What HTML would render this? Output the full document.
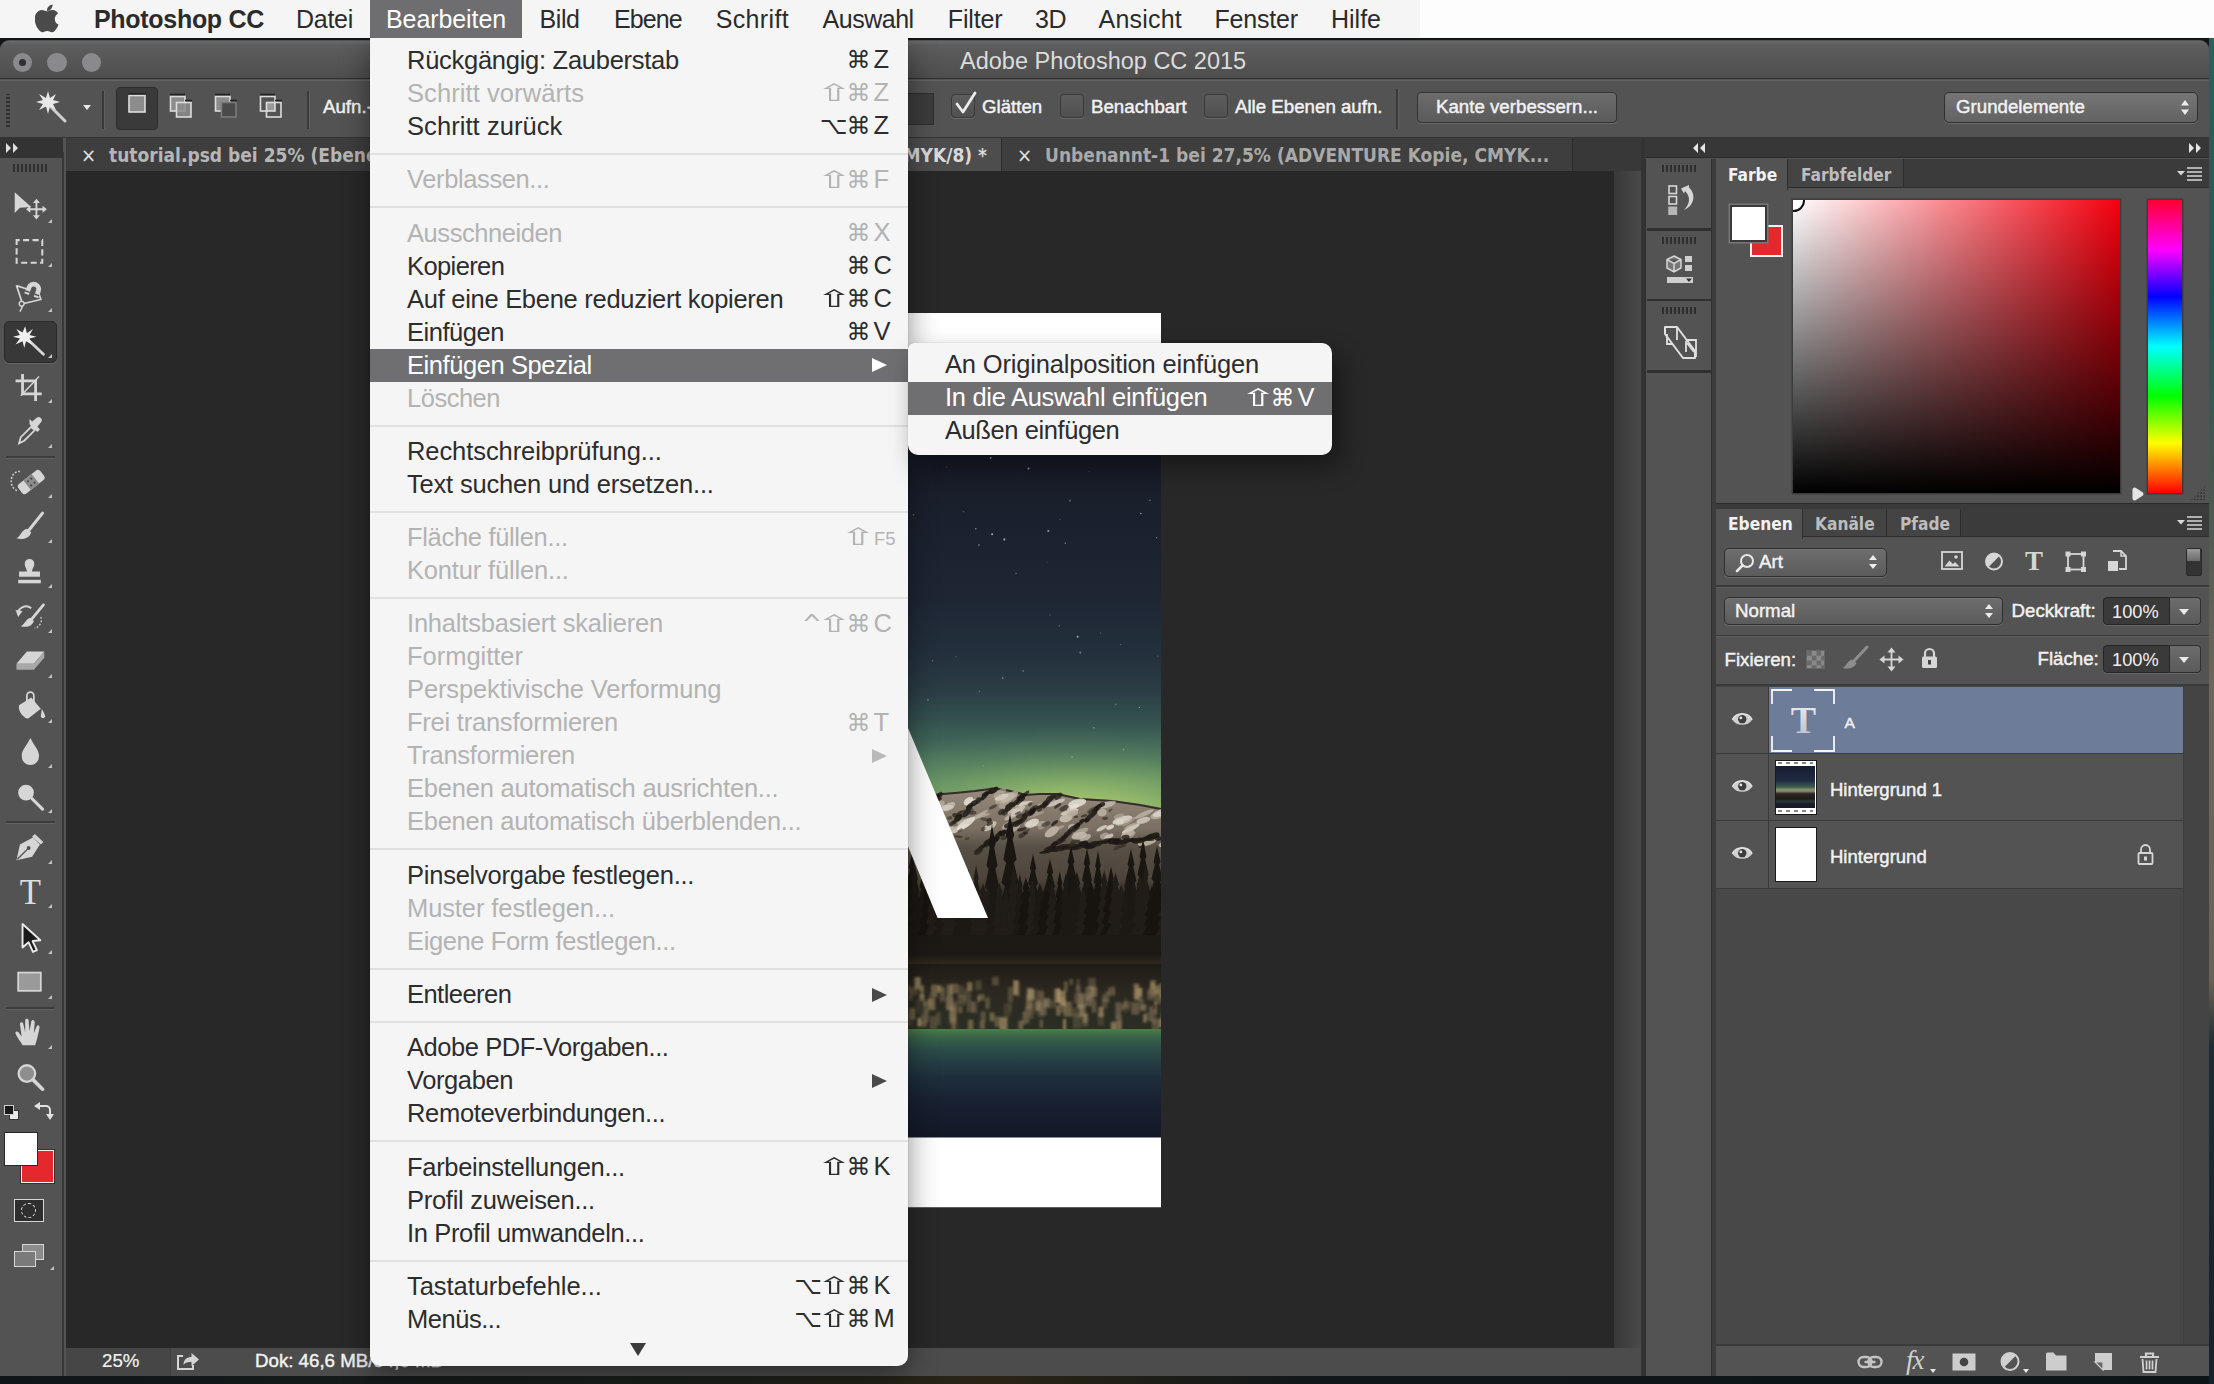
<!DOCTYPE html>
<html lang="de">
<head>
<meta charset="utf-8">
<title>Adobe Photoshop CC 2015</title>
<style>
*{box-sizing:border-box;margin:0;padding:0}
html,body{width:2214px;height:1384px;overflow:hidden;background:#10161a}
body{position:relative;font-family:"Liberation Sans","DejaVu Sans",sans-serif;color:#e6e6e6;-webkit-font-smoothing:antialiased}
.abs{position:absolute}
/* ---------- mac menubar ---------- */
#menubar{position:absolute;left:0;top:0;width:2214px;height:38px;background:#f5f5f5;z-index:50}
#menubar span{position:absolute;top:0;height:38px;line-height:38px;font-size:25px;color:#2b2b2b;white-space:nowrap}
#menubar .hl{background:#6e6e70;color:#fff}
/* ---------- PS window ---------- */
#win{position:absolute;left:0;top:40px;width:2209px;height:1336px;background:#535353;border-radius:9px 9px 0 0;overflow:hidden}
#titlebar{position:absolute;left:0;top:1px;width:100%;height:37.5px;background:linear-gradient(#6a6a6a,#5d5d5d 12%,#4e4e4e);border-bottom:1.5px solid #303030;border-radius:9px 9px 0 0}
#title{position:absolute;left:960px;top:-1px;line-height:42px;font-size:23.5px;color:#dcdcdc;white-space:nowrap}
.tl{position:absolute;top:11.5px;width:19.5px;height:19.5px;border-radius:50%;background:#8a8a8c}
#optbar{position:absolute;left:0;top:39.5px;width:100%;height:58px;background:#535353;border-top:1px solid #646464;border-bottom:1px solid #333}
.opt{position:absolute;line-height:22px;font-size:18.7px;color:#f2f2f2;white-space:nowrap;-webkit-text-stroke:.45px #f2f2f2}
.cb{position:absolute;width:24px;height:24px;border-radius:4px;background:linear-gradient(#5e5e5e,#505050);border:1.5px solid #3a3a3a;box-shadow:0 1px 0 #6a6a6a}
.btn{position:absolute;border-radius:4px;background:linear-gradient(#6c6c6c,#5a5a5a);border:1.5px solid #333;box-shadow:0 1px 0 #686868, inset 0 1px 0 #707070}

/* ---------- dropdown ---------- */
#menu{position:absolute;left:370px;top:38px;width:538px;height:1328px;background:#f5f5f5;border-radius:0 0 10px 10px;z-index:40;box-shadow:0 8px 30px rgba(0,0,0,.45),0 0 1px rgba(0,0,0,.5);padding-top:6px;overflow:hidden}
#menu .i{position:relative;height:33px;line-height:33px;font-size:25.5px;color:#2d2d2d;white-space:nowrap;padding-left:37px;letter-spacing:-.15px}
#menu .i.d{color:#b3b3b3}
#menu .i.sel{background:#6f6f71;color:#fff}
#menu .i b{position:absolute;right:12.5px;top:-.8px;font-weight:normal;letter-spacing:0}
#menu .i b u{text-decoration:none;font-family:"DejaVu Sans",sans-serif;font-size:24px;letter-spacing:-1px}
#menu .i b i{font-style:normal;display:inline-block;width:22px;text-align:left;margin-left:4px}
#menu .i em{position:absolute;right:21px;top:9.5px;width:0;height:0;border-left:15px solid #4a4a4a;border-top:7.5px solid transparent;border-bottom:7.5px solid transparent}
#menu .i.d em{border-left-color:#b9b9b9}
#menu .i.sel em{border-left-color:#fff}
u s{display:inline-block;text-decoration:none;transform:scaleX(1.8);margin:0 3.5px 0 3px}
#menu .s{height:20.3px;position:relative}
#menu .s:after{content:"";position:absolute;left:0;right:0;top:10px;height:2px;background:#e1e1e1}
#sub{position:absolute;left:908px;top:343px;width:424px;height:112px;background:#f5f5f5;border-radius:6px 10px 10px 10px;z-index:41;box-shadow:8px 12px 26px rgba(0,0,0,.42),0 0 1px rgba(0,0,0,.4);padding-top:6px;overflow:hidden}
#sub .i{position:relative;height:33px;line-height:31.5px;font-size:25.5px;color:#2d2d2d;white-space:nowrap;padding-left:37px;letter-spacing:-.15px}
#sub .i.sel{background:#6f6f71;color:#fff}
#sub .i b{position:absolute;right:12.5px;top:-.3px;font-weight:normal;letter-spacing:0}
#sub .i b u{text-decoration:none;font-family:"DejaVu Sans",sans-serif;font-size:24px;letter-spacing:-1px}
#sub .i b i{font-style:normal;display:inline-block;width:22px;margin-left:4px}

/* ---------- tab bar / canvas ---------- */
#tabbar{position:absolute;left:66px;top:98px;width:1575px;height:33.5px;background:#383838;border-bottom:1px solid #2a2a2a}
.tab{position:absolute;top:0;height:32.5px;background:#3e3e3e;border-right:1px solid #2b2b2b;font-family:"DejaVu Sans Condensed","DejaVu Sans","Liberation Sans",sans-serif;font-weight:bold;font-size:19px;line-height:35.5px;color:#a9a9a9;white-space:nowrap;overflow:hidden}
.tab.act{background:#4d4d4d;color:#d9d9d9}
.tab .x{position:absolute;left:0;top:0;font-weight:normal;font-size:20px;color:#e4e4e4}
#canvas{position:absolute;left:66px;top:131px;width:1548px;height:1177px;background:#282828;overflow:hidden}
#status{position:absolute;left:66px;top:1308px;width:1575px;height:28px;background:#4c4c4c}
#toolbox{position:absolute;left:0;top:112px;width:64px;height:1225px;background:#535353;border-right:2px solid #383838}
#tbhead{position:absolute;z-index:2;left:0;top:98px;width:63px;height:20px;background:#333}
.grip{position:absolute;height:8px;background:repeating-linear-gradient(90deg,#2e2e2e 0 2px,transparent 2px 4px)}
.tool{position:absolute;left:6px;width:50px;height:44px}
.tool svg{position:absolute;left:0;top:0;transform:translate(-1.5px,0) scale(.87);transform-origin:25px 22px}
.tsep{position:absolute;left:6px;width:49px;height:2px;background:#3d3d3d;box-shadow:0 1px 0 #626262}
.corner{position:absolute;width:0;height:0;border-bottom:4.5px solid #c4c4c4;border-left:4.5px solid transparent}
/* ---------- right dock ---------- */
#dockgap{position:absolute;left:1614px;top:131px;width:27px;height:1177px;background:linear-gradient(90deg,#383838,#4a4a4a)}
#dock{position:absolute;left:1645px;top:98px;width:564px;height:1239px;background:#535353}
.phead{position:absolute;background:#3b3b3b}
.ptab{position:absolute;top:0;height:100%;font-family:"DejaVu Sans Condensed","DejaVu Sans","Liberation Sans",sans-serif;font-weight:bold;font-size:17.2px;color:#bdbdbd;white-space:nowrap;border-right:1px solid #2d2d2d;background:#444}
.ptab.act{background:#535353;color:#f2f2f2}
.lbl{position:absolute;line-height:22px;font-size:18.7px;color:#f2f2f2;white-space:nowrap;-webkit-text-stroke:.45px #f2f2f2}
.dd{position:absolute;border-radius:5px;background:linear-gradient(#6e6e6e,#5b5b5b);border:1.5px solid #2f2f2f;box-shadow:0 1px 0 #6c6c6c,inset 0 1px 0 #747474}
.num{position:absolute;background:#3a3a3a;border:1.5px solid #262626;border-radius:4px 0 0 4px;font-size:18.3px;color:#f0f0f0;text-align:left;box-shadow:0 1px 0 #666}
.numbtn{position:absolute;background:linear-gradient(#6c6c6c,#5a5a5a);border:1.5px solid #2f2f2f;border-left:none;border-radius:0 4px 4px 0;box-shadow:0 1px 0 #666}
.dn{position:absolute;width:0;height:0;border-top:6px solid #e8e8e8;border-left:5px solid transparent;border-right:5px solid transparent}
.layer{position:absolute;left:75px;width:468px;height:67px;border-bottom:1.5px solid #3d3d3d}
.eye{position:absolute;left:75px;width:50px;height:67px;border-bottom:1.5px solid #3d3d3d;border-right:1.5px solid #3d3d3d;background:#535353}
</style>
</head>
<body>
<!-- desktop strip -->
<div class="abs" style="left:0;top:1376px;width:2214px;height:8px;background:linear-gradient(90deg,#0f1518,#1a1f1c 30%,#2a2416 45%,#10161a 60%,#0d1417)"></div>
<div class="abs" style="left:2209px;top:38px;width:5px;height:1346px;background:linear-gradient(#2e5f5a 0,#2a5652 20%,#4a5a50 35%,#6e6656 48%,#6a6252 70%,#1c2c34 75%,#14222a 100%)"></div>

<div id="win">
  <div id="titlebar">
    <div class="tl" style="left:12.6px"></div><div class="tl" style="left:47.3px"></div><div class="tl" style="left:81.8px"></div>
    <div class="abs" style="left:18.8px;top:17.7px;width:7.2px;height:7.2px;border-radius:50%;background:#303034"></div>
    <div id="title">Adobe Photoshop CC 2015</div>
  </div>

  <div id="optbar">
    <div class="grip" style="left:6px;top:13px;width:4px;height:33px;background:repeating-linear-gradient(0deg,#2e2e2e 0 2px,transparent 2px 4px)"></div>
    <div class="abs" style="left:102px;top:10px;width:1.5px;height:38px;background:#3a3a3a;box-shadow:1px 0 0 #606060"></div>
    <div class="abs" style="left:116px;top:6px;width:42px;height:43px;border-radius:4px;background:#3a3a3a;border:1px solid #2d2d2d"></div>
    <div class="abs" style="left:307px;top:10px;width:1.5px;height:38px;background:#3a3a3a;box-shadow:1px 0 0 #606060"></div>

    <svg class="abs" style="left:34px;top:9px" width="36" height="36" viewBox="0 0 36 36"><path d="M17 17 L31 31" stroke="#cfcfcf" stroke-width="3" stroke-linecap="round"/><path d="M14 1 l2 7 l6 -4 l-3 6 l7 2 l-7 2 l3 6 l-6 -3.500 l-2 7.500 l-2 -7.500 l-7 3.500 l4 -6 l-7 -2 l7 -2 l-4 -6 l7 4z" fill="#e8e8e8"/></svg>
    <div class="dn" style="left:83px;top:24px;border-top-width:5.500px;border-left-width:4.500px;border-right-width:4.500px"></div>
    <svg class="abs" style="left:126px;top:11px" width="22" height="24" viewBox="0 0 22 24"><rect x="3" y="3.500" width="16" height="16.500" fill="#8c8c8c" stroke="#dcdcdc" stroke-width="1.600"/><path d="M2 1.800 h18" stroke="#222" stroke-width="1.400"/></svg>
    <svg class="abs" style="left:167px;top:11px" width="28" height="30" viewBox="0 0 28 30"><rect x="3.500" y="4.500" width="14.500" height="14.500" fill="#8c8c8c" stroke="#dcdcdc" stroke-width="1.600"/><rect x="9.500" y="10.500" width="14.500" height="14.500" fill="#8c8c8c" fill-opacity=".85" stroke="#dcdcdc" stroke-width="1.600"/><path d="M3 2.500 h15 M18 8.500 h7" stroke="#222" stroke-width="1.400"/></svg>
    <svg class="abs" style="left:212px;top:11px" width="28" height="30" viewBox="0 0 28 30"><rect x="3.500" y="4.500" width="14.500" height="14.500" fill="#8c8c8c" stroke="#dcdcdc" stroke-width="1.600"/><rect x="9.500" y="10.500" width="14.500" height="14.500" fill="#4a4a4a" stroke="#7a7a7a" stroke-width="1.600"/><path d="M3 2.500 h15 M18 8.500 h7" stroke="#222" stroke-width="1.400"/></svg>
    <svg class="abs" style="left:257px;top:11px" width="28" height="30" viewBox="0 0 28 30"><rect x="9.500" y="10.500" width="8.500" height="8.500" fill="#9a9a9a"/><rect x="3.500" y="4.500" width="14.500" height="14.500" fill="none" stroke="#dcdcdc" stroke-width="1.600"/><rect x="9.500" y="10.500" width="14.500" height="14.500" fill="none" stroke="#dcdcdc" stroke-width="1.600"/><path d="M3 2.500 h15 M18 8.500 h7" stroke="#222" stroke-width="1.400"/></svg>
    <svg class="abs" style="left:952px;top:9px;z-index:3" width="28" height="28" viewBox="0 0 28 28"><path d="M5 14 l6 8 l12 -19" fill="none" stroke="#ececec" stroke-width="2.800" stroke-linecap="round" stroke-linejoin="round"/></svg>
    <svg class="abs" style="left:2180px;top:18.5px;z-index:3" width="10" height="17" viewBox="0 0 10 17"><path d="M1 6.500 l4 -5.500 l4 5.500z M1 10.500 l4 5.500 l4 -5.500z" fill="#ececec"/></svg>
    <div class="opt" style="left:323px;top:15.2px">Aufn.-</div>
    <div class="abs" style="left:908px;top:12px;width:26px;height:32px;background:#3c3c3c;border:1.5px solid #2e2e2e;border-left:none"></div>
    <div class="cb" style="left:951px;top:13px"></div>
    <div class="opt" style="left:982px;top:15.2px">Glätten</div>
    <div class="cb" style="left:1060px;top:13px"></div>
    <div class="opt" style="left:1091px;top:15.2px">Benachbart</div>
    <div class="cb" style="left:1204px;top:13px"></div>
    <div class="opt" style="left:1235px;top:15.2px">Alle Ebenen aufn.</div>
    <div class="abs" style="left:1396px;top:8px;width:1.5px;height:40px;background:#3a3a3a;box-shadow:1px 0 0 #606060"></div>
    <div class="btn" style="left:1417px;top:11px;width:200px;height:31px"></div>
    <div class="opt" style="left:1436px;top:15.2px">Kante verbessern...</div>
    <div class="dd" style="left:1944px;top:11px;width:254px;height:31px;background:linear-gradient(#767676,#626262)"></div>
    <div class="opt" style="left:1956px;top:15.2px">Grundelemente</div>
  </div>

  <div id="tbhead"><svg class="abs" style="left:5px;top:4px" width="16" height="12" viewBox="0 0 16 12"><path d="M1 1 l5 5 l-5 5z M8 1 l5 5 l-5 5z" fill="#e0e0e0"/></svg></div>
  <div id="toolbox">
    <div class="tool" style="top:33px"><svg width="50" height="44" viewBox="0 0 50 44"><path d="M8 5 V29 L14 23 L27 22 Z" fill="#d6d6d6"/><path d="M33 16 v17 M24.500 24.500 h17" stroke="#d6d6d6" stroke-width="2.200" fill="none"/><path d="M33 12.500 l-4 5 h8z M33 36.500 l-4 -5 h8z M21 24.500 l5 -4 v8z M45 24.500 l-5 -4 v8z" fill="#d6d6d6"/></svg><div class="corner" style="left:41.5px;top:33.5px"></div></div>
    <div class="tool" style="top:77px"><svg width="50" height="44" viewBox="0 0 50 44"><rect x="10.200" y="9.500" width="29.500" height="26" fill="none" stroke="#d6d6d6" stroke-width="2.300" stroke-dasharray="7 3.900" stroke-dashoffset="3.500"/></svg><div class="corner" style="left:41.5px;top:33.5px"></div></div>
    <div class="tool" style="top:122px"><svg width="50" height="44" viewBox="0 0 50 44"><path d="M10 10 L17 31 L38 26 L36 20" fill="none" stroke="#d6d6d6" stroke-width="2"/><path d="M10 10 L22 14" fill="none" stroke="#d6d6d6" stroke-width="2"/><g transform="rotate(20 29 15)"><path d="M21 22 v-8 a8.500 8.500 0 0 1 17 0 v8 h-5.500 v-8 a3 3 0 0 0 -6 0 v8z" fill="#d6d6d6"/><path d="M21 19 h5.500 M32.500 19 h5.500" stroke="#444" stroke-width="1.500"/></g><circle cx="16" cy="31" r="2.800" fill="#535353" stroke="#d6d6d6" stroke-width="1.600"/><path d="M17 34 l-3 6" stroke="#d6d6d6" stroke-width="1.600"/></svg><div class="corner" style="left:41.5px;top:33.5px"></div></div>
    <div class="tool" style="top:168px"><div class="abs" style="left:-2px;top:1px;width:53px;height:42px;border-radius:5px;background:#383838;border:1.5px solid #2a2a2a;box-shadow:0 1px 0 #666"></div><svg width="50" height="44" viewBox="0 0 50 44"><path d="M21 17 L41 36" stroke="#d6d6d6" stroke-width="3.2" stroke-linecap="round"/><path d="M20 4 l2 8 l7 -5 l-4 7 l8 2 l-8 2 l3 7 l-7 -4 l-2 8 l-2 -8 l-8 4 l5 -7 l-8 -2 l8 -2 l-4 -7 l7 4z" fill="#f0f0f0"/></svg><div class="corner" style="left:41.5px;top:33.5px"></div></div>
    <div class="tool" style="top:213px"><svg width="50" height="44" viewBox="0 0 50 44"><path d="M17 7 v23 h22 M9 15 h23 v23" fill="none" stroke="#d6d6d6" stroke-width="3.2"/><path d="M15 32 L36 10" stroke="#d6d6d6" stroke-width="1.6"/></svg><div class="corner" style="left:41.5px;top:33.5px"></div></div>
    <div class="tool" style="top:258px"><svg width="50" height="44" viewBox="0 0 50 44"><path d="M13 35 l2 -7 l12 -12 l4 4 l-12 12 z" fill="none" stroke="#d6d6d6" stroke-width="2"/><path d="M25 13 l9 9 l3 -3 l-3 -3 l4 -5 a3.5 3.5 0 0 0 -5 -5 l-5 4 l-3 -3z" fill="#d6d6d6"/></svg><div class="corner" style="left:41.5px;top:33.5px"></div></div>
    <div class="tool" style="top:308px"><svg width="50" height="44" viewBox="0 0 50 44"><g transform="rotate(-38 27 22)"><rect x="11" y="15" width="32" height="14" rx="4" fill="#d6d6d6"/><rect x="21" y="15" width="12" height="14" fill="#8a8a8a"/><circle cx="24.5" cy="19" r="1.2" fill="#444"/><circle cx="29.5" cy="19" r="1.2" fill="#444"/><circle cx="24.5" cy="25" r="1.2" fill="#444"/><circle cx="29.5" cy="25" r="1.2" fill="#444"/></g><path d="M14 10 a9 11 0 0 0 -2 22" fill="none" stroke="#d6d6d6" stroke-width="1.8" stroke-dasharray="2 2"/></svg><div class="corner" style="left:41.5px;top:33.5px"></div></div>
    <div class="tool" style="top:353px"><svg width="50" height="44" viewBox="0 0 50 44"><path d="M40 6 L24 26" stroke="#d6d6d6" stroke-width="3.5" stroke-linecap="round"/><path d="M22 24 l5 4 c-2 7 -9 9 -17 7 c5 -2 5 -9 12 -11z" fill="#d6d6d6"/></svg><div class="corner" style="left:41.5px;top:33.5px"></div></div>
    <div class="tool" style="top:398px"><svg width="50" height="44" viewBox="0 0 50 44"><path d="M25 7 a5.5 5.5 0 0 1 5.5 5.5 c0 4 -2.5 5 -2.5 9 h9 v6 h-24 v-6 h9 c0 -4 -2.5 -5 -2.5 -9 a5.5 5.5 0 0 1 5.5 -5.5z" fill="#d6d6d6"/><rect x="12" y="31" width="26" height="4" fill="#d6d6d6"/></svg><div class="corner" style="left:41.5px;top:33.5px"></div></div>
    <div class="tool" style="top:443px"><svg width="50" height="44" viewBox="0 0 50 44"><path d="M41 8 L28 24" stroke="#d6d6d6" stroke-width="3.2" stroke-linecap="round"/><path d="M26 23 l4 3.5 c-2 6 -8 8 -15 6 c5 -2 5 -7.5 11 -9.5z" fill="#d6d6d6"/><path d="M12 19 a9 8 0 0 1 15 -7" fill="none" stroke="#d6d6d6" stroke-width="2.2"/><path d="M9 14 l8 1 l-5 7z" fill="#d6d6d6"/><path d="M38 22 a10 10 0 0 1 -7 13" fill="none" stroke="#d6d6d6" stroke-width="1.6" stroke-dasharray="2 2"/></svg><div class="corner" style="left:41.5px;top:33.5px"></div></div>
    <div class="tool" style="top:488px"><svg width="50" height="44" viewBox="0 0 50 44"><path d="M22 10 h20 l-12 14 h-20z" fill="#d6d6d6"/><path d="M10 24 h20 l12 -14 v7 l-12 14 h-20z" fill="#a8a8a8"/></svg><div class="corner" style="left:41.5px;top:33.5px"></div></div>
    <div class="tool" style="top:533px"><svg width="50" height="44" viewBox="0 0 50 44"><path d="M13 20 l14 -9 l11 13 l-14 11 c-4 2 -13 -8 -11 -15z" fill="#d6d6d6"/><path d="M22 22 v-13 a4 4 0 0 1 8 0 v8" fill="none" stroke="#d6d6d6" stroke-width="2"/><path d="M39 24 c3 5 4 7 4 9 a2.6 2.6 0 0 1 -5 0 c0 -3 1 -5 1 -9z" fill="#d6d6d6"/></svg><div class="corner" style="left:41.5px;top:33.5px"></div></div>
    <div class="tool" style="top:578px"><svg width="50" height="44" viewBox="0 0 50 44"><path d="M26 6 c5 10 10 14 10 21 a10 10 0 0 1 -20 0 c0 -7 5 -11 10 -21z" fill="#d6d6d6"/></svg><div class="corner" style="left:41.5px;top:33.5px"></div></div>
    <div class="tool" style="top:623px"><svg width="50" height="44" viewBox="0 0 50 44"><circle cx="21" cy="17" r="9" fill="#d6d6d6"/><path d="M28 24 L40 36" stroke="#d6d6d6" stroke-width="3.6" stroke-linecap="round"/></svg><div class="corner" style="left:41.5px;top:33.5px"></div></div>
    <div class="tool" style="top:674px"><svg width="50" height="44" viewBox="0 0 50 44"><path d="M10 36 l4 -18 l15 -8 l8 8 l-9 14z" fill="#d6d6d6"/><path d="M31 6 l10 9 l-3 3 l-10 -9z" fill="#d6d6d6"/><path d="M11 35 l12 -12" stroke="#535353" stroke-width="1.6"/><circle cx="24" cy="22" r="2.2" fill="#535353"/></svg><div class="corner" style="left:41.5px;top:33.5px"></div></div>
    <div class="tool" style="top:718px"><svg width="50" height="44" viewBox="0 0 50 44"><text x="26" y="36" text-anchor="middle" font-family="Liberation Serif, serif" font-size="40" fill="#dcdcdc">T</text></svg><div class="corner" style="left:41.5px;top:33.5px"></div></div>
    <div class="tool" style="top:764px"><svg width="50" height="44" viewBox="0 0 50 44"><path d="M17 6 v27 l7 -6 l5 11 l4.5 -2 l-5 -10.5 l9 -1z" fill="#1a1a1a" stroke="#ececec" stroke-width="2.2" stroke-linejoin="round"/></svg><div class="corner" style="left:41.5px;top:33.5px"></div></div>
    <div class="tool" style="top:809px"><svg width="50" height="44" viewBox="0 0 50 44"><rect x="12" y="10" width="26" height="21" fill="#9a9a9a" stroke="#d6d6d6" stroke-width="2"/></svg><div class="corner" style="left:41.5px;top:33.5px"></div></div>
    <div class="tool" style="top:859px"><svg width="50" height="44" viewBox="0 0 50 44"><path d="M17 36 c-3 -5 -7 -10 -8 -13 c-1 -3 2 -4 4 -1 l3 4 l-2 -14 c0 -3 3.5 -3 4 0 l2 9 l0 -13 c0 -3 4 -3 4 0 l1 12 l2 -11 c1 -3 4 -2 4 1 l-1 12 l3 -7 c1 -3 4 -2 3.5 1 c-1 6 -3 14 -5 20z" fill="#d6d6d6"/></svg><div class="corner" style="left:41.5px;top:33.5px"></div></div>
    <div class="tool" style="top:903px"><svg width="50" height="44" viewBox="0 0 50 44"><circle cx="22" cy="18" r="9.5" fill="#8e8e8e" stroke="#d6d6d6" stroke-width="2.6"/><path d="M29 25 L40 36" stroke="#d6d6d6" stroke-width="4.2" stroke-linecap="round"/></svg></div>
    <div class="tsep" style="top:304px"></div>
    <div class="tsep" style="top:669px"></div>
    <div class="tsep" style="top:855px"></div>
    <div class="grip" style="left:13px;top:12px;width:35px"></div>
    <!-- default / swap colours -->
    <div class="abs" style="left:9px;top:958px;width:10px;height:10px;background:#e8e8e8;border:1px solid #333"></div>
    <div class="abs" style="left:4px;top:953px;width:10px;height:10px;background:#1a1a1a;border:1px solid #ccc"></div>
    <svg class="abs" style="left:33px;top:950px" width="22" height="20" viewBox="0 0 22 20"><path d="M6 4 h7 a4 4 0 0 1 4 4 v5" fill="none" stroke="#e0e0e0" stroke-width="2"/><path d="M7 0 v8 l-6 -4z M13 12 h8 l-4 6z" fill="#e0e0e0"/></svg>
    <div class="abs" style="left:21px;top:998px;width:33px;height:33px;background:#e5272e;border:1.5px solid #f2f2f2;box-shadow:0 0 0 1px #333"></div>
    <div class="abs" style="left:4px;top:980px;width:34px;height:34px;background:#fff;border:1.5px solid #2a2a2a"></div>
    <!-- quick mask -->
    <div class="abs" style="left:14px;top:1047px;width:30px;height:23px;background:#2e2e2e;border:1.5px solid #d6d6d6"></div>
    <div class="abs" style="left:21px;top:1051px;width:15px;height:15px;border-radius:50%;border:1.5px dashed #e8e8e8"></div>
    <!-- screen mode -->
    <div class="abs" style="left:22px;top:1092px;width:22px;height:16px;background:#8c8c8c;border:1.5px solid #d6d6d6"></div>
    <div class="abs" style="left:14px;top:1099px;width:22px;height:16px;background:#7a7a7a;border:1.5px solid #d6d6d6"></div>
    <div class="corner" style="left:50px;top:1114px"></div>
  </div>

  <div id="tabbar">
    <div class="tab" style="left:0;width:560px;padding-left:43px;color:#b6b6b6"><span class="x" style="left:15px">×</span>tutorial.psd bei 25% (Ebene 1, CMYK/8) *</div>
    <div class="tab act" style="left:560px;width:376px"><span class="abs" style="right:14px;top:0">tutorial Kopie.psd bei 25% (A, CMYK/8) *</span></div>
    <div class="tab" style="left:936px;width:571px;padding-left:43px"><span class="x" style="left:15px">×</span>Unbenannt-1 bei 27,5% (ADVENTURE Kopie, CMYK...</div>
  </div>
  <div id="canvas"><svg class="abs" style="left:0;top:0" width="1548" height="1177" viewBox="0 0 1548 1177">
<defs>
<clipPath id="doc"><rect x="451" y="142" width="644" height="894.5"/></clipPath>
<linearGradient id="sky" x1="0" y1="0" x2="0" y2="1">
<stop offset="0" stop-color="#131622"/><stop offset=".175" stop-color="#181c28"/><stop offset=".5" stop-color="#1e2634"/><stop offset=".62" stop-color="#232f3c"/><stop offset=".71" stop-color="#2a3c44"/><stop offset=".78" stop-color="#33504e"/><stop offset=".85" stop-color="#44695a"/><stop offset=".925" stop-color="#5f8c62"/><stop offset="1" stop-color="#6f9c64"/>
</linearGradient>
<radialGradient id="glow" cx=".866" cy="1" r=".42" gradientTransform="translate(0 0)"><stop offset="0" stop-color="#b4cf74" stop-opacity="1"/><stop offset=".3" stop-color="#9cc06c" stop-opacity=".7"/><stop offset=".7" stop-color="#6f9c64" stop-opacity=".22"/><stop offset="1" stop-color="#5c8e68" stop-opacity="0"/></radialGradient>
<linearGradient id="mt" gradientUnits="userSpaceOnUse" x1="0" y1="615" x2="0" y2="759"><stop offset="0" stop-color="#978c7d"/><stop offset=".3" stop-color="#7a6f62"/><stop offset=".42" stop-color="#585046"/><stop offset=".7" stop-color="#4a4238"/><stop offset="1" stop-color="#1f1b16"/></linearGradient>
<linearGradient id="tr" x1="0" y1="0" x2="0" y2="1"><stop offset="0" stop-color="#1b1713" stop-opacity="0"/><stop offset=".35" stop-color="#1b1713"/><stop offset=".85" stop-color="#1d1915"/><stop offset="1" stop-color="#3a3024"/></linearGradient>
<linearGradient id="rf" x1="0" y1="0" x2="0" y2="1"><stop offset="0" stop-color="#1f1b16"/><stop offset=".4" stop-color="#2c2820"/><stop offset="1" stop-color="#2a2e24"/></linearGradient>
<linearGradient id="wt" x1="0" y1="0" x2="0" y2="1"><stop offset="0" stop-color="#4c7c48"/><stop offset=".08" stop-color="#38624a"/><stop offset=".2" stop-color="#2a4a48"/><stop offset=".45" stop-color="#1e2e3c"/><stop offset=".7" stop-color="#181f30"/><stop offset="1" stop-color="#141826"/></linearGradient>
<filter id="b1"><feGaussianBlur stdDeviation="1.3"/></filter>
<filter id="b0"><feGaussianBlur stdDeviation=".6"/></filter>
</defs>
<rect x="1548" y="0" width="0" height="0"/>
<g clip-path="url(#doc)">
<rect x="451" y="142" width="644" height="894.5" fill="#fff"/>
<rect x="451" y="214" width="644" height="427" fill="url(#sky)"/>
<rect x="451" y="439" width="644" height="202" fill="url(#glow)"/>
<circle cx="994.0" cy="348.2" r="0.5" fill="#dfe6ee" opacity="0.47"/><circle cx="1034.3" cy="462.0" r="0.6" fill="#dfe6ee" opacity="0.45"/><circle cx="962.5" cy="297.5" r="1.0" fill="#dfe6ee" opacity="0.64"/><circle cx="847.5" cy="343.7" r="0.8" fill="#dfe6ee" opacity="0.35"/><circle cx="950.1" cy="402.3" r="0.6" fill="#dfe6ee" opacity="0.59"/><circle cx="1023.2" cy="300.3" r="0.5" fill="#dfe6ee" opacity="0.32"/><circle cx="880.4" cy="295.8" r="0.5" fill="#dfe6ee" opacity="0.36"/><circle cx="1004.0" cy="329.7" r="1.1" fill="#dfe6ee" opacity="0.27"/><circle cx="1054.8" cy="473.5" r="0.5" fill="#dfe6ee" opacity="0.52"/><circle cx="897.6" cy="340.7" r="0.8" fill="#dfe6ee" opacity="0.30"/><circle cx="890.1" cy="485.7" r="0.6" fill="#dfe6ee" opacity="0.28"/><circle cx="1049.8" cy="533.4" r="0.8" fill="#dfe6ee" opacity="0.32"/><circle cx="983.9" cy="444.0" r="0.8" fill="#dfe6ee" opacity="0.25"/><circle cx="917.4" cy="595.1" r="0.5" fill="#dfe6ee" opacity="0.34"/><circle cx="924.6" cy="286.9" r="1.0" fill="#dfe6ee" opacity="0.63"/><circle cx="912.9" cy="374.1" r="1.1" fill="#dfe6ee" opacity="0.31"/><circle cx="936.8" cy="507.0" r="0.7" fill="#dfe6ee" opacity="0.67"/><circle cx="866.5" cy="489.7" r="0.7" fill="#dfe6ee" opacity="0.38"/><circle cx="913.7" cy="520.3" r="0.5" fill="#dfe6ee" opacity="0.56"/><circle cx="1074.8" cy="342.5" r="0.8" fill="#dfe6ee" opacity="0.64"/><circle cx="926.1" cy="363.3" r="1.0" fill="#dfe6ee" opacity="0.69"/><circle cx="1027.8" cy="556.8" r="0.7" fill="#dfe6ee" opacity="0.52"/><circle cx="1011.6" cy="465.7" r="1.0" fill="#dfe6ee" opacity="0.65"/><circle cx="909.7" cy="357.8" r="0.8" fill="#dfe6ee" opacity="0.55"/><circle cx="1083.9" cy="329.3" r="0.8" fill="#dfe6ee" opacity="0.47"/><circle cx="861.9" cy="528.8" r="1.1" fill="#dfe6ee" opacity="0.28"/><circle cx="999.3" cy="372.1" r="0.7" fill="#dfe6ee" opacity="0.68"/><circle cx="938.3" cy="368.4" r="1.1" fill="#dfe6ee" opacity="0.64"/><circle cx="1090.6" cy="366.7" r="0.7" fill="#dfe6ee" opacity="0.48"/><circle cx="993.4" cy="454.8" r="0.7" fill="#dfe6ee" opacity="0.34"/><circle cx="981.0" cy="390.9" r="0.5" fill="#dfe6ee" opacity="0.30"/><circle cx="1014.3" cy="481.6" r="1.1" fill="#dfe6ee" opacity="0.37"/><circle cx="1091.8" cy="484.9" r="0.5" fill="#dfe6ee" opacity="0.44"/><circle cx="1073.4" cy="536.4" r="0.6" fill="#dfe6ee" opacity="0.58"/><circle cx="1057.5" cy="578.6" r="0.8" fill="#dfe6ee" opacity="0.37"/><circle cx="982.3" cy="360.0" r="1.1" fill="#dfe6ee" opacity="0.58"/><circle cx="957.1" cy="499.9" r="0.6" fill="#dfe6ee" opacity="0.66"/><circle cx="1006.1" cy="585.9" r="0.6" fill="#dfe6ee" opacity="0.53"/>
<polygon points="451.0,664.0 494.0,649.0 544.0,634.0 594.0,641.0 634.0,625.0 694.0,632.0 734.0,619.0 784.0,632.0 834.0,628.0 871.0,622.5 889.0,621.0 909.0,619.0 928.0,616.5 942.0,618.5 960.0,623.0 974.0,622.0 991.0,622.0 1014.0,627.0 1046.0,629.0 1074.0,633.0 1095.0,637.0 1095.0,797.0 451.0,797.0" fill="url(#mt)"/>
<polyline points="451.0,665.0 494.0,650.0 544.0,635.0 594.0,642.0 634.0,626.0 694.0,633.0 734.0,620.0 784.0,633.0 834.0,629.0 871.0,623.5 889.0,622.0 909.0,620.0 928.0,617.5 942.0,619.5 960.0,624.0 974.0,623.0 991.0,623.0 1014.0,628.0 1046.0,630.0 1074.0,634.0 1095.0,638.0" fill="none" stroke="#241f1a" stroke-width="2.2" opacity=".85"/>
<g filter="url(#b0)"><ellipse cx="913.0" cy="644.7" rx="10.5" ry="1.8" fill="#ddd6ca" opacity="0.5142499422851401" transform="rotate(-31.111773470927155 913.0 644.7)"/><ellipse cx="871.7" cy="636.7" rx="9.1" ry="2.1" fill="#c8beae" opacity="0.5419542029490364" transform="rotate(-16.727656241089722 871.7 636.7)"/><ellipse cx="897.2" cy="642.6" rx="5.8" ry="2.0" fill="#b8ae9e" opacity="0.8514926237963916" transform="rotate(-34.41874977653172 897.2 642.6)"/><ellipse cx="1014.6" cy="660.7" rx="8.3" ry="2.8" fill="#b8ae9e" opacity="0.7553868657897227" transform="rotate(-21.75952456590322 1014.6 660.7)"/><ellipse cx="1064.8" cy="657.7" rx="10.0" ry="2.1" fill="#e6e0d6" opacity="0.8610710119638889" transform="rotate(-27.103155031217728 1064.8 657.7)"/><ellipse cx="941.4" cy="655.6" rx="5.5" ry="4.0" fill="#ddd6ca" opacity="0.5535728898315754" transform="rotate(-29.01631315563963 941.4 655.6)"/><ellipse cx="1036.1" cy="641.7" rx="4.7" ry="3.6" fill="#c8beae" opacity="0.7173107051549429" transform="rotate(-17.379025569930064 1036.1 641.7)"/><ellipse cx="915.1" cy="644.8" rx="9.6" ry="1.7" fill="#b8ae9e" opacity="0.7729532550501454" transform="rotate(-12.215675670472155 915.1 644.8)"/><ellipse cx="1091.7" cy="644.5" rx="7.5" ry="3.4" fill="#b8ae9e" opacity="0.8994346639087278" transform="rotate(-14.176273161730304 1091.7 644.5)"/><ellipse cx="1053.7" cy="651.4" rx="4.2" ry="3.4" fill="#b8ae9e" opacity="0.70592972905964" transform="rotate(-20.78144563710747 1053.7 651.4)"/><ellipse cx="902.7" cy="630.3" rx="5.4" ry="3.6" fill="#e6e0d6" opacity="0.8707569261578854" transform="rotate(-32.61883940924355 902.7 630.3)"/><ellipse cx="883.2" cy="659.7" rx="7.2" ry="3.4" fill="#e6e0d6" opacity="0.6563537492363449" transform="rotate(-24.338914767785536 883.2 659.7)"/><ellipse cx="950.6" cy="632.2" rx="6.6" ry="3.1" fill="#ddd6ca" opacity="0.837705147863242" transform="rotate(-30.46827033013928 950.6 632.2)"/><ellipse cx="973.4" cy="652.7" rx="6.8" ry="2.0" fill="#d2c9bb" opacity="0.5379206613080525" transform="rotate(-15.191271376718273 973.4 652.7)"/><ellipse cx="943.5" cy="625.9" rx="9.9" ry="3.7" fill="#c8beae" opacity="0.7278735834348355" transform="rotate(-30.226303952878588 943.5 625.9)"/><ellipse cx="1003.5" cy="641.0" rx="9.3" ry="2.2" fill="#ddd6ca" opacity="0.7977739624469795" transform="rotate(-15.55030048637894 1003.5 641.0)"/><ellipse cx="1056.4" cy="649.1" rx="10.3" ry="3.7" fill="#e6e0d6" opacity="0.8069079203356616" transform="rotate(-15.869271572390659 1056.4 649.1)"/><ellipse cx="962.3" cy="652.8" rx="4.5" ry="2.4" fill="#c8beae" opacity="0.5403452754336434" transform="rotate(-12.798795820095172 962.3 652.8)"/><ellipse cx="1096.8" cy="673.5" rx="4.3" ry="2.2" fill="#e6e0d6" opacity="0.6351262456656928" transform="rotate(-18.505969232668857 1096.8 673.5)"/><ellipse cx="1000.0" cy="647.1" rx="6.7" ry="4.0" fill="#d2c9bb" opacity="0.7805002782333208" transform="rotate(-15.956507400539799 1000.0 647.1)"/><ellipse cx="1094.4" cy="641.7" rx="8.3" ry="3.3" fill="#e6e0d6" opacity="0.6774585914658178" transform="rotate(-22.380967838604576 1094.4 641.7)"/><ellipse cx="1044.1" cy="656.2" rx="4.1" ry="2.1" fill="#e6e0d6" opacity="0.8622573058034413" transform="rotate(-21.24855772769311 1044.1 656.2)"/><ellipse cx="985.8" cy="660.8" rx="8.0" ry="4.0" fill="#c8beae" opacity="0.8238112886090718" transform="rotate(-33.09510027069308 985.8 660.8)"/><ellipse cx="1006.4" cy="656.7" rx="4.3" ry="3.8" fill="#d2c9bb" opacity="0.6543609931223437" transform="rotate(-10.748251719563708 1006.4 656.7)"/><ellipse cx="1065.8" cy="655.3" rx="8.2" ry="2.6" fill="#c8beae" opacity="0.6682815470827694" transform="rotate(-21.831043958930728 1065.8 655.3)"/><ellipse cx="1006.5" cy="642.5" rx="6.0" ry="3.1" fill="#b8ae9e" opacity="0.8717901446924462" transform="rotate(-18.41018059913036 1006.5 642.5)"/><ellipse cx="1041.0" cy="633.7" rx="9.4" ry="3.0" fill="#d2c9bb" opacity="0.6635223113138811" transform="rotate(-17.891771310948663 1041.0 633.7)"/><ellipse cx="881.1" cy="637.0" rx="6.8" ry="3.0" fill="#e6e0d6" opacity="0.5294017130064714" transform="rotate(-12.361228461618541 881.1 637.0)"/><ellipse cx="967.8" cy="643.6" rx="10.8" ry="2.1" fill="#b8ae9e" opacity="0.5393891809501378" transform="rotate(-14.745789482679637 967.8 643.6)"/><ellipse cx="1078.2" cy="643.0" rx="10.7" ry="2.1" fill="#ddd6ca" opacity="0.5201598990686177" transform="rotate(-24.57105084216433 1078.2 643.0)"/><ellipse cx="896.1" cy="655.3" rx="6.5" ry="1.9" fill="#e6e0d6" opacity="0.6771456454389639" transform="rotate(-18.302718509552395 896.1 655.3)"/><ellipse cx="973.8" cy="635.5" rx="8.1" ry="2.5" fill="#b8ae9e" opacity="0.8260527551103669" transform="rotate(-31.575663806379776 973.8 635.5)"/><ellipse cx="935.7" cy="626.2" rx="7.4" ry="2.8" fill="#e6e0d6" opacity="0.8137235269169569" transform="rotate(-19.375589369505338 935.7 626.2)"/><ellipse cx="951.6" cy="634.7" rx="8.8" ry="2.9" fill="#b8ae9e" opacity="0.5760098565611262" transform="rotate(-28.033983231829556 951.6 634.7)"/><ellipse cx="924.1" cy="655.3" rx="7.5" ry="3.1" fill="#d2c9bb" opacity="0.8515105625485495" transform="rotate(-34.01230286277653 924.1 655.3)"/><ellipse cx="883.0" cy="635.3" rx="7.0" ry="3.1" fill="#ddd6ca" opacity="0.5890245006729607" transform="rotate(-28.04279050370812 883.0 635.3)"/><ellipse cx="1042.8" cy="665.7" rx="5.1" ry="2.1" fill="#e6e0d6" opacity="0.6936038150744304" transform="rotate(-26.1475181187256 1042.8 665.7)"/><ellipse cx="946.8" cy="641.5" rx="4.9" ry="3.7" fill="#ddd6ca" opacity="0.678923823860833" transform="rotate(-14.448948870649101 946.8 641.5)"/><ellipse cx="1061.7" cy="662.9" rx="7.1" ry="3.4" fill="#c8beae" opacity="0.8239507888277922" transform="rotate(-25.77625011029345 1061.7 662.9)"/><ellipse cx="1019.3" cy="666.9" rx="6.3" ry="2.9" fill="#d2c9bb" opacity="0.6710610230380487" transform="rotate(-25.768487270811647 1019.3 666.9)"/><ellipse cx="891.3" cy="656.3" rx="4.5" ry="1.7" fill="#b8ae9e" opacity="0.7271871789838578" transform="rotate(-14.617482668659292 891.3 656.3)"/><ellipse cx="975.6" cy="655.6" rx="4.1" ry="2.3" fill="#b8ae9e" opacity="0.5326835712644606" transform="rotate(-27.40486910664267 975.6 655.6)"/><ellipse cx="1035.7" cy="657.3" rx="6.0" ry="1.9" fill="#e6e0d6" opacity="0.7629052660643327" transform="rotate(-26.82335224628552 1035.7 657.3)"/><ellipse cx="1077.4" cy="649.3" rx="7.1" ry="3.0" fill="#e6e0d6" opacity="0.6751970813578702" transform="rotate(-14.923764245143982 1077.4 649.3)"/><ellipse cx="939.1" cy="633.5" rx="6.8" ry="3.8" fill="#b8ae9e" opacity="0.5993220868238422" transform="rotate(-25.95764479999919 939.1 633.5)"/><ellipse cx="953.1" cy="638.3" rx="6.8" ry="2.5" fill="#d2c9bb" opacity="0.7955329792612931" transform="rotate(-25.793813989109765 953.1 638.3)"/><ellipse cx="958.8" cy="632.3" rx="8.1" ry="1.9" fill="#ddd6ca" opacity="0.8035789413880384" transform="rotate(-12.97754391008754 958.8 632.3)"/><ellipse cx="933.7" cy="622.1" rx="7.6" ry="2.9" fill="#b8ae9e" opacity="0.6183516739798071" transform="rotate(-34.44149429887457 933.7 622.1)"/><ellipse cx="1062.6" cy="650.6" rx="8.1" ry="2.3" fill="#b8ae9e" opacity="0.5336184660629067" transform="rotate(-32.958184913984645 1062.6 650.6)"/><ellipse cx="1038.5" cy="664.9" rx="4.6" ry="3.1" fill="#d2c9bb" opacity="0.5389797679954514" transform="rotate(-14.59370284359839 1038.5 664.9)"/><ellipse cx="966.1" cy="652.2" rx="7.4" ry="3.8" fill="#e6e0d6" opacity="0.805883721885294" transform="rotate(-25.140435593120674 966.1 652.2)"/><ellipse cx="946.7" cy="658.5" rx="8.7" ry="2.7" fill="#b8ae9e" opacity="0.8219126812247488" transform="rotate(-33.188287074092656 946.7 658.5)"/><ellipse cx="1011.2" cy="632.1" rx="9.3" ry="4.0" fill="#e6e0d6" opacity="0.841401615750397" transform="rotate(-14.852318507064783 1011.2 632.1)"/><ellipse cx="1060.8" cy="667.1" rx="10.7" ry="3.1" fill="#b8ae9e" opacity="0.6448210797014428" transform="rotate(-34.7462913762306 1060.8 667.1)"/><ellipse cx="894.3" cy="657.7" rx="10.4" ry="2.1" fill="#d2c9bb" opacity="0.8964041520213617" transform="rotate(-25.611942543821723 894.3 657.7)"/><ellipse cx="907.6" cy="630.5" rx="7.0" ry="2.2" fill="#ddd6ca" opacity="0.688577933038606" transform="rotate(-16.73074682898583 907.6 630.5)"/><ellipse cx="938.8" cy="627.6" rx="10.4" ry="3.8" fill="#c8beae" opacity="0.5068680154802394" transform="rotate(-22.973046319690546 938.8 627.6)"/><ellipse cx="1053.1" cy="645.3" rx="5.4" ry="2.4" fill="#b8ae9e" opacity="0.5941635149718115" transform="rotate(-17.068906636552427 1053.1 645.3)"/><ellipse cx="1005.8" cy="637.3" rx="5.3" ry="2.2" fill="#d2c9bb" opacity="0.8642712824270244" transform="rotate(-11.56620846842787 1005.8 637.3)"/><ellipse cx="1013.2" cy="664.7" rx="7.9" ry="3.6" fill="#c8beae" opacity="0.8549676013070813" transform="rotate(-12.143674910870093 1013.2 664.7)"/><ellipse cx="947.7" cy="643.6" rx="10.7" ry="2.7" fill="#d2c9bb" opacity="0.6597701998046245" transform="rotate(-29.564497480630845 947.7 643.6)"/><ellipse cx="899.9" cy="652.6" rx="10.8" ry="3.5" fill="#e6e0d6" opacity="0.8150713205046822" transform="rotate(-33.55156193346656 899.9 652.6)"/><ellipse cx="1081.6" cy="670.6" rx="10.1" ry="3.8" fill="#c8beae" opacity="0.8187092102961337" transform="rotate(-17.16781273084909 1081.6 670.6)"/><ellipse cx="1008.4" cy="635.4" rx="5.1" ry="2.3" fill="#e6e0d6" opacity="0.86324216386451" transform="rotate(-14.749795512086653 1008.4 635.4)"/><ellipse cx="899.2" cy="650.7" rx="8.3" ry="2.8" fill="#ddd6ca" opacity="0.5602613466139895" transform="rotate(-15.740556832719722 899.2 650.7)"/><ellipse cx="869.3" cy="656.3" rx="9.9" ry="3.6" fill="#ddd6ca" opacity="0.6406910814938567" transform="rotate(-19.628420189670685 869.3 656.3)"/><ellipse cx="990.4" cy="658.0" rx="8.9" ry="1.7" fill="#b8ae9e" opacity="0.7173635806362197" transform="rotate(-22.35078120537212 990.4 658.0)"/><ellipse cx="873.4" cy="633.1" rx="5.4" ry="3.2" fill="#c8beae" opacity="0.5833633215344605" transform="rotate(-21.415716183716523 873.4 633.1)"/><ellipse cx="989.9" cy="631.7" rx="9.8" ry="2.3" fill="#e6e0d6" opacity="0.6621845545650276" transform="rotate(-21.090232374947263 989.9 631.7)"/><ellipse cx="1098.4" cy="665.0" rx="4.5" ry="1.7" fill="#d2c9bb" opacity="0.5423008074392706" transform="rotate(-25.144092091199262 1098.4 665.0)"/><ellipse cx="927.8" cy="619.4" rx="5.4" ry="2.5" fill="#1c1814" opacity="0.9159197412005192" transform="rotate(-32.20601403899376 927.8 619.4)"/><ellipse cx="925.5" cy="619.3" rx="2.9" ry="2.7" fill="#2a241e" opacity="0.7516825260623043" transform="rotate(-34.59833075252696 925.5 619.3)"/><ellipse cx="922.3" cy="621.5" rx="4.4" ry="1.9" fill="#221d18" opacity="0.8887305088195953" transform="rotate(-36.110414254164546 922.3 621.5)"/><ellipse cx="919.0" cy="622.9" rx="3.8" ry="1.7" fill="#221d18" opacity="0.9362593771401925" transform="rotate(-35.92979210059737 919.0 622.9)"/><ellipse cx="919.1" cy="625.3" rx="5.4" ry="1.6" fill="#1c1814" opacity="0.8554301494628124" transform="rotate(-46.71401815904391 919.1 625.3)"/><ellipse cx="916.3" cy="626.8" rx="3.2" ry="1.6" fill="#221d18" opacity="0.8481848875134003" transform="rotate(-47.74749053634105 916.3 626.8)"/><ellipse cx="912.2" cy="628.6" rx="2.9" ry="2.1" fill="#1c1814" opacity="0.7854137780528804" transform="rotate(-29.41856767479094 912.2 628.6)"/><ellipse cx="912.6" cy="630.5" rx="3.2" ry="1.7" fill="#2a241e" opacity="0.796486371909723" transform="rotate(-41.714737206450735 912.6 630.5)"/><ellipse cx="908.1" cy="632.1" rx="3.9" ry="2.5" fill="#1c1814" opacity="0.8650573555110891" transform="rotate(-34.78489936703963 908.1 632.1)"/><ellipse cx="904.1" cy="635.0" rx="3.7" ry="2.5" fill="#1c1814" opacity="0.8393007829368344" transform="rotate(-44.87792989064712 904.1 635.0)"/><ellipse cx="902.9" cy="636.8" rx="2.9" ry="2.6" fill="#221d18" opacity="0.8916281758599692" transform="rotate(-27.425080854727828 902.9 636.8)"/><ellipse cx="901.3" cy="638.9" rx="4.3" ry="1.7" fill="#2a241e" opacity="0.7495423357687485" transform="rotate(-26.662306018911984 901.3 638.9)"/><ellipse cx="900.7" cy="642.0" rx="5.8" ry="2.4" fill="#1c1814" opacity="0.8567788341258519" transform="rotate(-45.05252059984686 900.7 642.0)"/><ellipse cx="894.6" cy="642.5" rx="4.5" ry="2.5" fill="#221d18" opacity="0.7229393186588958" transform="rotate(-28.18723053462824 894.6 642.5)"/><ellipse cx="892.8" cy="646.4" rx="4.1" ry="2.6" fill="#1c1814" opacity="0.9260143320436109" transform="rotate(-36.41435996701019 892.8 646.4)"/><ellipse cx="891.6" cy="647.3" rx="3.4" ry="2.9" fill="#221d18" opacity="0.8503765026957528" transform="rotate(-46.93367612846387 891.6 647.3)"/><ellipse cx="890.2" cy="648.5" rx="5.6" ry="1.9" fill="#2a241e" opacity="0.7907748878575017" transform="rotate(-45.85310869187602 890.2 648.5)"/><ellipse cx="886.8" cy="652.0" rx="4.1" ry="2.1" fill="#2a241e" opacity="0.7345627932020455" transform="rotate(-31.097365604483603 886.8 652.0)"/><ellipse cx="992.4" cy="625.2" rx="4.7" ry="2.5" fill="#1c1814" opacity="0.7396374635389719" transform="rotate(-39.69985480084571 992.4 625.2)"/><ellipse cx="986.6" cy="625.8" rx="2.9" ry="2.1" fill="#221d18" opacity="0.8299426613961784" transform="rotate(-43.40854506117628 986.6 625.8)"/><ellipse cx="986.3" cy="627.0" rx="4.7" ry="1.6" fill="#2a241e" opacity="0.8968770961179346" transform="rotate(-39.92055413139421 986.3 627.0)"/><ellipse cx="983.5" cy="628.0" rx="3.7" ry="2.8" fill="#2a241e" opacity="0.8411939109825242" transform="rotate(-39.82600127314855 983.5 628.0)"/><ellipse cx="980.2" cy="632.1" rx="4.1" ry="2.9" fill="#2a241e" opacity="0.8022551130971225" transform="rotate(-39.15108663637767 980.2 632.1)"/><ellipse cx="978.8" cy="633.9" rx="4.3" ry="2.3" fill="#221d18" opacity="0.8050875632172151" transform="rotate(-49.39469595985666 978.8 633.9)"/><ellipse cx="977.7" cy="633.8" rx="4.7" ry="2.1" fill="#221d18" opacity="0.8493804051017577" transform="rotate(-31.202862823462606 977.7 633.8)"/><ellipse cx="972.8" cy="636.4" rx="2.7" ry="1.7" fill="#221d18" opacity="0.7605867309544878" transform="rotate(-28.173729889704976 972.8 636.4)"/><ellipse cx="973.0" cy="637.7" rx="2.9" ry="2.9" fill="#2a241e" opacity="0.776574704901956" transform="rotate(-40.11183773349193 973.0 637.7)"/><ellipse cx="967.6" cy="638.3" rx="5.7" ry="2.9" fill="#2a241e" opacity="0.7921928190933382" transform="rotate(-36.34608603615265 967.6 638.3)"/><ellipse cx="966.4" cy="640.3" rx="4.8" ry="2.1" fill="#1c1814" opacity="0.9258536202306691" transform="rotate(-47.535923212833225 966.4 640.3)"/><ellipse cx="964.8" cy="641.9" rx="4.4" ry="2.9" fill="#1c1814" opacity="0.7740265645905036" transform="rotate(-31.795497182893104 964.8 641.9)"/><ellipse cx="959.3" cy="643.7" rx="4.0" ry="2.2" fill="#2a241e" opacity="0.7993136840710025" transform="rotate(-41.08755687395541 959.3 643.7)"/><ellipse cx="959.0" cy="645.1" rx="2.6" ry="2.8" fill="#221d18" opacity="0.781087780182097" transform="rotate(-46.41933107116516 959.0 645.1)"/><ellipse cx="957.3" cy="649.0" rx="5.6" ry="1.8" fill="#2a241e" opacity="0.924199352895769" transform="rotate(-45.11238554196861 957.3 649.0)"/><ellipse cx="955.1" cy="649.5" rx="4.2" ry="1.8" fill="#2a241e" opacity="0.9488510190692353" transform="rotate(-44.949741375987074 955.1 649.5)"/><ellipse cx="951.8" cy="650.7" rx="5.6" ry="1.6" fill="#1c1814" opacity="0.776519906010065" transform="rotate(-29.557720885986853 951.8 650.7)"/><ellipse cx="950.6" cy="652.7" rx="4.0" ry="2.8" fill="#221d18" opacity="0.8739877107682594" transform="rotate(-26.554842334440824 950.6 652.7)"/><ellipse cx="946.1" cy="653.8" rx="3.3" ry="2.0" fill="#2a241e" opacity="0.8727869756453952" transform="rotate(-43.27625833805353 946.1 653.8)"/><ellipse cx="944.7" cy="656.8" rx="3.5" ry="1.9" fill="#2a241e" opacity="0.8311020625465373" transform="rotate(-47.106009053084925 944.7 656.8)"/><ellipse cx="941.4" cy="660.0" rx="5.6" ry="1.8" fill="#1c1814" opacity="0.769208706044674" transform="rotate(-34.001745159216085 941.4 660.0)"/><ellipse cx="937.2" cy="661.7" rx="4.0" ry="2.3" fill="#2a241e" opacity="0.9268488799135046" transform="rotate(-49.82555422937504 937.2 661.7)"/><ellipse cx="936.7" cy="662.1" rx="4.0" ry="2.4" fill="#1c1814" opacity="0.7712884291789422" transform="rotate(-31.107966194018495 936.7 662.1)"/><ellipse cx="932.8" cy="663.1" rx="4.4" ry="1.8" fill="#1c1814" opacity="0.9469342162793366" transform="rotate(-49.15971595385806 932.8 663.1)"/><ellipse cx="931.2" cy="666.2" rx="3.8" ry="2.9" fill="#221d18" opacity="0.7150543678177428" transform="rotate(-48.39932610168954 931.2 666.2)"/><ellipse cx="930.0" cy="668.4" rx="3.6" ry="2.2" fill="#1c1814" opacity="0.8291837716315815" transform="rotate(-37.359265270257666 930.0 668.4)"/><ellipse cx="927.8" cy="669.5" rx="4.3" ry="2.9" fill="#1c1814" opacity="0.8484682406851168" transform="rotate(-30.719159326483478 927.8 669.5)"/><ellipse cx="922.4" cy="670.4" rx="4.8" ry="2.3" fill="#221d18" opacity="0.8966411186682279" transform="rotate(-30.22170407295743 922.4 670.4)"/><ellipse cx="920.4" cy="672.3" rx="3.3" ry="2.4" fill="#221d18" opacity="0.7653342046501735" transform="rotate(-44.937315472061144 920.4 672.3)"/><ellipse cx="920.8" cy="672.7" rx="4.1" ry="2.8" fill="#221d18" opacity="0.7379526626473307" transform="rotate(-49.55528292645638 920.8 672.7)"/><ellipse cx="916.4" cy="675.6" rx="4.0" ry="1.9" fill="#1c1814" opacity="0.7181339627397968" transform="rotate(-27.317345854227348 916.4 675.6)"/><ellipse cx="914.2" cy="677.7" rx="5.3" ry="1.9" fill="#1c1814" opacity="0.7134947641026406" transform="rotate(-39.36600479440416 914.2 677.7)"/><ellipse cx="912.3" cy="680.2" rx="5.1" ry="2.7" fill="#2a241e" opacity="0.8245862414845767" transform="rotate(-33.74831046526069 912.3 680.2)"/><ellipse cx="1036.0" cy="633.6" rx="3.4" ry="2.2" fill="#2a241e" opacity="0.9077313411904222" transform="rotate(-30.33237988976106 1036.0 633.6)"/><ellipse cx="1031.9" cy="635.7" rx="3.8" ry="1.8" fill="#1c1814" opacity="0.732104358988885" transform="rotate(-31.11485731578159 1031.9 635.7)"/><ellipse cx="1031.7" cy="636.8" rx="5.1" ry="2.3" fill="#1c1814" opacity="0.7008363225322579" transform="rotate(-39.75359352490189 1031.7 636.8)"/><ellipse cx="1029.1" cy="638.6" rx="4.4" ry="2.2" fill="#1c1814" opacity="0.9429102548105044" transform="rotate(-33.00364986134275 1029.1 638.6)"/><ellipse cx="1027.5" cy="643.3" rx="4.6" ry="1.9" fill="#1c1814" opacity="0.837971691517832" transform="rotate(-43.957943018835 1027.5 643.3)"/><ellipse cx="1024.2" cy="645.1" rx="3.8" ry="2.0" fill="#2a241e" opacity="0.7545811318600072" transform="rotate(-45.98973777088329 1024.2 645.1)"/><ellipse cx="1022.3" cy="647.2" rx="5.1" ry="2.4" fill="#2a241e" opacity="0.9309775331735111" transform="rotate(-45.568013105058014 1022.3 647.2)"/><ellipse cx="1021.1" cy="649.0" rx="3.2" ry="2.1" fill="#1c1814" opacity="0.7538480643526868" transform="rotate(-41.31469815103532 1021.1 649.0)"/><ellipse cx="1016.1" cy="649.8" rx="3.1" ry="1.8" fill="#1c1814" opacity="0.848471799618958" transform="rotate(-31.010020094264128 1016.1 649.8)"/><ellipse cx="1014.9" cy="651.6" rx="4.7" ry="1.8" fill="#221d18" opacity="0.7511459327122663" transform="rotate(-40.42598280698466 1014.9 651.6)"/><ellipse cx="1011.0" cy="654.2" rx="3.8" ry="1.9" fill="#1c1814" opacity="0.8297257210724962" transform="rotate(-31.45957826406949 1011.0 654.2)"/><ellipse cx="1010.4" cy="655.7" rx="4.8" ry="1.8" fill="#1c1814" opacity="0.7902744122915834" transform="rotate(-46.16202903388547 1010.4 655.7)"/><ellipse cx="1009.7" cy="657.1" rx="5.2" ry="2.6" fill="#1c1814" opacity="0.7050993282310425" transform="rotate(-41.94792120925704 1009.7 657.1)"/><ellipse cx="1005.2" cy="658.2" rx="5.6" ry="2.0" fill="#2a241e" opacity="0.8673051324764389" transform="rotate(-42.44405005239463 1005.2 658.2)"/><ellipse cx="1003.8" cy="661.4" rx="3.2" ry="2.3" fill="#1c1814" opacity="0.7079435784528477" transform="rotate(-42.19299956957187 1003.8 661.4)"/><ellipse cx="1000.7" cy="663.5" rx="3.0" ry="2.6" fill="#221d18" opacity="0.7784653662247216" transform="rotate(-38.707684601438345 1000.7 663.5)"/><ellipse cx="998.2" cy="666.5" rx="5.4" ry="2.3" fill="#221d18" opacity="0.8013274232608951" transform="rotate(-40.33732646762794 998.2 666.5)"/><ellipse cx="997.8" cy="666.5" rx="3.5" ry="2.0" fill="#1c1814" opacity="0.7350760147733436" transform="rotate(-28.794766399166445 997.8 666.5)"/><ellipse cx="995.0" cy="669.2" rx="2.5" ry="2.6" fill="#2a241e" opacity="0.7745233309649299" transform="rotate(-33.237732189352386 995.0 669.2)"/><ellipse cx="993.3" cy="670.4" rx="4.9" ry="2.5" fill="#221d18" opacity="0.7586500983374349" transform="rotate(-34.18701565645952 993.3 670.4)"/><ellipse cx="987.7" cy="672.9" rx="3.9" ry="1.6" fill="#221d18" opacity="0.9326687356982072" transform="rotate(-42.88587691316121 987.7 672.9)"/><ellipse cx="987.8" cy="674.3" rx="5.7" ry="1.8" fill="#1c1814" opacity="0.7876795978568577" transform="rotate(-32.192257747089755 987.8 674.3)"/><ellipse cx="984.7" cy="677.8" rx="5.7" ry="2.7" fill="#221d18" opacity="0.8456594118047591" transform="rotate(-32.465660599445215 984.7 677.8)"/><ellipse cx="982.5" cy="679.6" rx="2.6" ry="2.1" fill="#221d18" opacity="0.9274220698754084" transform="rotate(-27.189495711706254 982.5 679.6)"/><ellipse cx="959.1" cy="623.6" rx="5.5" ry="1.9" fill="#2a241e" opacity="0.7813828704619452" transform="rotate(-43.66560912276219 959.1 623.6)"/><ellipse cx="955.5" cy="625.5" rx="5.6" ry="2.3" fill="#221d18" opacity="0.903790429361272" transform="rotate(-27.823553944750845 955.5 625.5)"/><ellipse cx="955.4" cy="627.7" rx="3.7" ry="2.8" fill="#1c1814" opacity="0.844042733511491" transform="rotate(-26.44045721431224 955.4 627.7)"/><ellipse cx="953.3" cy="630.4" rx="4.7" ry="2.1" fill="#221d18" opacity="0.7159070068526514" transform="rotate(-48.291489141135486 953.3 630.4)"/><ellipse cx="949.5" cy="631.8" rx="5.9" ry="2.1" fill="#1c1814" opacity="0.8708564190325829" transform="rotate(-43.17854022446882 949.5 631.8)"/><ellipse cx="947.0" cy="633.9" rx="2.6" ry="2.4" fill="#221d18" opacity="0.7571240079741035" transform="rotate(-32.995635975141916 947.0 633.9)"/><ellipse cx="943.3" cy="634.5" rx="4.4" ry="2.1" fill="#1c1814" opacity="0.8367533272013284" transform="rotate(-28.775634309245643 943.3 634.5)"/><ellipse cx="942.9" cy="636.7" rx="5.4" ry="2.8" fill="#2a241e" opacity="0.9422061465616998" transform="rotate(-41.661994296299916 942.9 636.7)"/><ellipse cx="938.6" cy="641.2" rx="3.6" ry="2.6" fill="#2a241e" opacity="0.7990579066547625" transform="rotate(-46.089626482890544 938.6 641.2)"/><ellipse cx="935.4" cy="641.0" rx="3.7" ry="2.5" fill="#2a241e" opacity="0.7734194877921088" transform="rotate(-39.6300160725213 935.4 641.0)"/><ellipse cx="873.5" cy="624.5" rx="4.2" ry="2.5" fill="#221d18" opacity="0.7812465841065677" transform="rotate(-45.55536230701292 873.5 624.5)"/><ellipse cx="872.2" cy="625.4" rx="2.7" ry="1.6" fill="#1c1814" opacity="0.9214036615654403" transform="rotate(-42.24566330895358 872.2 625.4)"/><ellipse cx="871.6" cy="629.0" rx="4.9" ry="1.6" fill="#2a241e" opacity="0.9165726486830157" transform="rotate(-28.25428964905976 871.6 629.0)"/><ellipse cx="866.6" cy="630.8" rx="4.3" ry="2.7" fill="#221d18" opacity="0.7632359138055693" transform="rotate(-34.13056298125235 866.6 630.8)"/><ellipse cx="866.0" cy="634.5" rx="3.1" ry="2.8" fill="#1c1814" opacity="0.9106778576294525" transform="rotate(-29.28649631713163 866.0 634.5)"/><ellipse cx="864.9" cy="636.3" rx="5.0" ry="2.4" fill="#221d18" opacity="0.9003096158817688" transform="rotate(-46.86950217916467 864.9 636.3)"/><ellipse cx="862.3" cy="639.5" rx="3.3" ry="1.8" fill="#1c1814" opacity="0.8179587106882159" transform="rotate(-32.654210936090976 862.3 639.5)"/><ellipse cx="862.0" cy="642.8" rx="3.4" ry="1.9" fill="#221d18" opacity="0.8578660507980251" transform="rotate(-40.08206196377748 862.0 642.8)"/><ellipse cx="980.0" cy="680.7" rx="7.0" ry="1.6" fill="#1c1814" opacity="0.9177037709250928" transform="rotate(-11.123975174718934 980.0 680.7)"/><ellipse cx="982.9" cy="678.1" rx="5.2" ry="2.7" fill="#221d18" opacity="0.7825144553645189" transform="rotate(-14.469652647857279 982.9 678.1)"/><ellipse cx="985.8" cy="678.5" rx="4.9" ry="2.1" fill="#221d18" opacity="0.80969712920576" transform="rotate(2.396194463772865 985.8 678.5)"/><ellipse cx="988.6" cy="678.5" rx="3.9" ry="2.6" fill="#221d18" opacity="0.891343225803225" transform="rotate(4.6194820964919785 988.6 678.5)"/><ellipse cx="991.5" cy="677.2" rx="5.8" ry="2.3" fill="#1c1814" opacity="0.8105614065659854" transform="rotate(1.676737831103356 991.5 677.2)"/><ellipse cx="994.4" cy="677.5" rx="6.6" ry="2.8" fill="#221d18" opacity="0.7300924333778396" transform="rotate(-8.526897298629784 994.4 677.5)"/><ellipse cx="997.2" cy="675.0" rx="5.3" ry="1.7" fill="#221d18" opacity="0.768503527570783" transform="rotate(-10.44871910199472 997.2 675.0)"/><ellipse cx="1000.1" cy="676.5" rx="4.5" ry="1.9" fill="#1c1814" opacity="0.7379036722041235" transform="rotate(-14.857409910463327 1000.1 676.5)"/><ellipse cx="1003.0" cy="677.2" rx="5.7" ry="1.5" fill="#221d18" opacity="0.8208592804888868" transform="rotate(4.943159787217091 1003.0 677.2)"/><ellipse cx="1005.9" cy="674.7" rx="6.5" ry="2.2" fill="#221d18" opacity="0.7878502909224595" transform="rotate(-3.8042607313486894 1005.9 674.7)"/><ellipse cx="1008.8" cy="675.7" rx="3.9" ry="2.4" fill="#221d18" opacity="0.7692767690655361" transform="rotate(3.777615918338853 1008.8 675.7)"/><ellipse cx="1011.6" cy="676.6" rx="7.0" ry="2.2" fill="#1c1814" opacity="0.7439620816284289" transform="rotate(-14.46440950860084 1011.6 676.6)"/><ellipse cx="1014.5" cy="673.5" rx="3.5" ry="1.6" fill="#221d18" opacity="0.7059978398560803" transform="rotate(-3.885700060425968 1014.5 673.5)"/><ellipse cx="1017.4" cy="672.7" rx="4.9" ry="2.8" fill="#1c1814" opacity="0.9398159492099976" transform="rotate(-14.779430662563517 1017.4 672.7)"/><ellipse cx="1020.2" cy="674.2" rx="6.2" ry="2.7" fill="#221d18" opacity="0.7998176695927014" transform="rotate(1.0615894990224177 1020.2 674.2)"/><ellipse cx="1023.1" cy="675.1" rx="6.1" ry="3.0" fill="#1c1814" opacity="0.9340343761264889" transform="rotate(-5.358325183054015 1023.1 675.1)"/><ellipse cx="1026.0" cy="674.8" rx="4.6" ry="2.8" fill="#1c1814" opacity="0.7023715935215565" transform="rotate(-12.184363718743516 1026.0 674.8)"/><ellipse cx="1028.9" cy="672.3" rx="5.9" ry="2.3" fill="#221d18" opacity="0.9026894353186644" transform="rotate(-7.706368472142991 1028.9 672.3)"/><ellipse cx="1031.8" cy="673.3" rx="4.4" ry="1.9" fill="#221d18" opacity="0.8485500411952858" transform="rotate(-9.707439491927277 1031.8 673.3)"/><ellipse cx="1034.6" cy="671.2" rx="3.7" ry="1.6" fill="#1c1814" opacity="0.8365596154788221" transform="rotate(-1.3955709031246855 1034.6 671.2)"/><ellipse cx="1037.5" cy="670.7" rx="3.4" ry="1.7" fill="#221d18" opacity="0.7455858566439709" transform="rotate(-14.560159741425316 1037.5 670.7)"/><ellipse cx="1040.4" cy="671.2" rx="3.2" ry="1.6" fill="#1c1814" opacity="0.7052025222787278" transform="rotate(-11.508747142420056 1040.4 671.2)"/><ellipse cx="1043.2" cy="669.6" rx="5.4" ry="2.4" fill="#221d18" opacity="0.8075270296509295" transform="rotate(4.253314426346602 1043.2 669.6)"/><ellipse cx="1046.1" cy="669.8" rx="4.6" ry="2.6" fill="#1c1814" opacity="0.903145798804923" transform="rotate(-13.601003039298172 1046.1 669.8)"/><ellipse cx="1049.0" cy="670.2" rx="6.7" ry="2.8" fill="#221d18" opacity="0.8312718968642323" transform="rotate(-14.798423029761379 1049.0 670.2)"/><ellipse cx="1051.9" cy="671.2" rx="5.6" ry="2.9" fill="#1c1814" opacity="0.7530721705713359" transform="rotate(-2.6745850824432758 1051.9 671.2)"/><ellipse cx="1054.8" cy="671.5" rx="6.4" ry="2.4" fill="#1c1814" opacity="0.730357138882358" transform="rotate(-0.22650082560802964 1054.8 671.5)"/><ellipse cx="1057.6" cy="670.5" rx="4.7" ry="2.2" fill="#221d18" opacity="0.8253778528981404" transform="rotate(-7.490876972576157 1057.6 670.5)"/><ellipse cx="1060.5" cy="669.4" rx="3.2" ry="2.9" fill="#221d18" opacity="0.811703726061017" transform="rotate(-3.1326956978201963 1060.5 669.4)"/><ellipse cx="1063.4" cy="669.2" rx="6.7" ry="1.7" fill="#221d18" opacity="0.782034638138249" transform="rotate(-9.880366215408944 1063.4 669.2)"/><ellipse cx="1066.2" cy="669.0" rx="3.8" ry="2.2" fill="#221d18" opacity="0.7131163743650055" transform="rotate(4.362750370307232 1066.2 669.0)"/><ellipse cx="1069.1" cy="669.2" rx="6.6" ry="1.7" fill="#1c1814" opacity="0.9100542484296839" transform="rotate(-2.0154527142751473 1069.1 669.2)"/><ellipse cx="1072.0" cy="669.6" rx="6.3" ry="2.7" fill="#221d18" opacity="0.948421149815408" transform="rotate(-13.703530850274813 1072.0 669.6)"/><ellipse cx="1074.9" cy="668.9" rx="5.8" ry="1.9" fill="#221d18" opacity="0.8135164167870337" transform="rotate(-4.27360579157509 1074.9 668.9)"/><ellipse cx="1077.8" cy="668.6" rx="3.8" ry="1.9" fill="#1c1814" opacity="0.7183872414888255" transform="rotate(-3.9000678896188745 1077.8 668.6)"/><ellipse cx="1080.6" cy="667.9" rx="5.0" ry="1.9" fill="#221d18" opacity="0.9137621157913343" transform="rotate(0.4160624548702252 1080.6 667.9)"/><ellipse cx="1083.5" cy="666.6" rx="6.6" ry="2.7" fill="#1c1814" opacity="0.9029157492627401" transform="rotate(-11.429317727634462 1083.5 666.6)"/><ellipse cx="1086.4" cy="665.4" rx="6.7" ry="2.9" fill="#1c1814" opacity="0.9084694416979522" transform="rotate(-12.651894477600926 1086.4 665.4)"/><ellipse cx="1089.2" cy="664.4" rx="4.6" ry="2.8" fill="#221d18" opacity="0.925448417457132" transform="rotate(-13.562307344631835 1089.2 664.4)"/><ellipse cx="1092.1" cy="667.3" rx="3.8" ry="2.4" fill="#1c1814" opacity="0.8399923985235369" transform="rotate(4.887788657958442 1092.1 667.3)"/><ellipse cx="956.0" cy="664.3" rx="4.1" ry="2.3" fill="#332b24" opacity="0.7303975217869553" transform="rotate(-29.570994788835062 956.0 664.3)"/><ellipse cx="917.2" cy="658.1" rx="2.5" ry="1.9" fill="#2a241e" opacity="0.5451863653762782" transform="rotate(-34.1988053699614 917.2 658.1)"/><ellipse cx="1085.4" cy="668.8" rx="3.1" ry="1.3" fill="#2a241e" opacity="0.7420793818082498" transform="rotate(-3.1872181900885295 1085.4 668.8)"/><ellipse cx="951.9" cy="642.0" rx="3.2" ry="1.2" fill="#241f1a" opacity="0.5930412035335048" transform="rotate(-21.26925236726244 951.9 642.0)"/><ellipse cx="1009.9" cy="645.8" rx="2.4" ry="1.2" fill="#2a241e" opacity="0.6212236067640933" transform="rotate(-4.818907000920575 1009.9 645.8)"/><ellipse cx="923.1" cy="649.5" rx="2.9" ry="2.3" fill="#332b24" opacity="0.8332048211177085" transform="rotate(-36.091805891438646 923.1 649.5)"/><ellipse cx="1018.1" cy="644.7" rx="3.4" ry="1.3" fill="#332b24" opacity="0.7104421867216622" transform="rotate(-17.579529717691965 1018.1 644.7)"/><ellipse cx="883.8" cy="647.0" rx="2.8" ry="1.7" fill="#332b24" opacity="0.6025344642371182" transform="rotate(-5.254624928277416 883.8 647.0)"/><ellipse cx="1023.6" cy="645.9" rx="3.2" ry="1.2" fill="#332b24" opacity="0.635833151617835" transform="rotate(-26.083930231046214 1023.6 645.9)"/><ellipse cx="892.5" cy="665.6" rx="4.3" ry="1.2" fill="#241f1a" opacity="0.5348000717058337" transform="rotate(4.825922775728721 892.5 665.6)"/><ellipse cx="889.3" cy="644.2" rx="3.1" ry="2.1" fill="#241f1a" opacity="0.74405637584891" transform="rotate(9.494408778067914 889.3 644.2)"/><ellipse cx="1056.6" cy="675.2" rx="4.0" ry="1.2" fill="#2a241e" opacity="0.626610129770974" transform="rotate(-16.757923697772128 1056.6 675.2)"/><ellipse cx="941.7" cy="654.6" rx="3.8" ry="2.5" fill="#2a241e" opacity="0.847411421138649" transform="rotate(-20.243011030044574 941.7 654.6)"/><ellipse cx="1059.6" cy="666.2" rx="4.1" ry="2.5" fill="#2a241e" opacity="0.8499125205858014" transform="rotate(-7.190651818629412 1059.6 666.2)"/><ellipse cx="1050.8" cy="676.8" rx="3.6" ry="1.9" fill="#332b24" opacity="0.6294674779521506" transform="rotate(-32.85185429619082 1050.8 676.8)"/><ellipse cx="959.8" cy="662.1" rx="2.3" ry="1.3" fill="#241f1a" opacity="0.7435689681623148" transform="rotate(-0.6833425380176479 959.8 662.1)"/><ellipse cx="1077.4" cy="669.5" rx="4.9" ry="1.7" fill="#2a241e" opacity="0.6515989237579154" transform="rotate(-32.20986291177557 1077.4 669.5)"/><ellipse cx="954.3" cy="645.0" rx="4.5" ry="2.3" fill="#2a241e" opacity="0.6228867657075107" transform="rotate(-13.205770343138614 954.3 645.0)"/><ellipse cx="991.7" cy="634.8" rx="4.4" ry="1.5" fill="#241f1a" opacity="0.6974051098794247" transform="rotate(-36.61304519777211 991.7 634.8)"/><ellipse cx="923.7" cy="652.9" rx="3.5" ry="1.5" fill="#332b24" opacity="0.7721168971513614" transform="rotate(-27.661238912201604 923.7 652.9)"/><ellipse cx="964.2" cy="633.0" rx="2.7" ry="1.7" fill="#241f1a" opacity="0.536577049350614" transform="rotate(-33.11734592514489 964.2 633.0)"/><ellipse cx="1075.7" cy="675.3" rx="3.5" ry="1.2" fill="#241f1a" opacity="0.6837380957661048" transform="rotate(-19.67786169871256 1075.7 675.3)"/><ellipse cx="1009.8" cy="670.4" rx="4.9" ry="1.6" fill="#2a241e" opacity="0.5801092922971501" transform="rotate(-0.14343357889572417 1009.8 670.4)"/><ellipse cx="894.2" cy="659.4" rx="3.1" ry="1.4" fill="#241f1a" opacity="0.5099882110337517" transform="rotate(-34.48725264763916 894.2 659.4)"/><ellipse cx="938.2" cy="666.5" rx="3.9" ry="2.3" fill="#2a241e" opacity="0.636417597872379" transform="rotate(-25.0258234596433 938.2 666.5)"/><ellipse cx="918.4" cy="648.3" rx="4.0" ry="1.6" fill="#332b24" opacity="0.5712843356945254" transform="rotate(9.661016794548893 918.4 648.3)"/><ellipse cx="997.8" cy="637.3" rx="4.9" ry="2.4" fill="#2a241e" opacity="0.638056521631636" transform="rotate(-25.032610123076466 997.8 637.3)"/><ellipse cx="1039.0" cy="647.4" rx="3.1" ry="1.6" fill="#332b24" opacity="0.6346297929098287" transform="rotate(-7.564114022815772 1039.0 647.4)"/><ellipse cx="945.8" cy="632.4" rx="2.9" ry="1.8" fill="#2a241e" opacity="0.6847554917168595" transform="rotate(-12.622896983214659 945.8 632.4)"/><ellipse cx="960.9" cy="640.3" rx="2.3" ry="1.6" fill="#332b24" opacity="0.6258597457364603" transform="rotate(7.548825379578453 960.9 640.3)"/><ellipse cx="988.6" cy="652.1" rx="4.2" ry="1.6" fill="#241f1a" opacity="0.8382054108137147" transform="rotate(-39.64611318425262 988.6 652.1)"/><ellipse cx="1005.5" cy="673.5" rx="3.1" ry="1.9" fill="#332b24" opacity="0.7940286267951919" transform="rotate(-29.510268118532032 1005.5 673.5)"/><ellipse cx="1044.4" cy="639.3" rx="2.6" ry="1.2" fill="#332b24" opacity="0.5185655660891813" transform="rotate(-35.358400712421634 1044.4 639.3)"/><ellipse cx="927.0" cy="636.0" rx="4.4" ry="1.6" fill="#332b24" opacity="0.6408019414650198" transform="rotate(-25.711435015422815 927.0 636.0)"/><ellipse cx="1025.4" cy="639.3" rx="5.0" ry="2.2" fill="#332b24" opacity="0.5113878250947338" transform="rotate(-32.5314307885764 1025.4 639.3)"/><ellipse cx="904.9" cy="639.4" rx="2.8" ry="2.5" fill="#332b24" opacity="0.5167826782042055" transform="rotate(-8.764906345384453 904.9 639.4)"/><ellipse cx="996.0" cy="670.0" rx="3.9" ry="1.0" fill="#241f1a" opacity="0.7634565738888797" transform="rotate(-11.008493547568026 996.0 670.0)"/><ellipse cx="870.3" cy="661.6" rx="3.3" ry="2.0" fill="#2a241e" opacity="0.5603684512785708" transform="rotate(-35.826919585272734 870.3 661.6)"/><ellipse cx="1026.6" cy="641.7" rx="4.3" ry="2.0" fill="#2a241e" opacity="0.6557503269014628" transform="rotate(4.864071434248345 1026.6 641.7)"/><ellipse cx="1036.4" cy="671.5" rx="4.9" ry="1.5" fill="#241f1a" opacity="0.7491905491026711" transform="rotate(-4.850541532638928 1036.4 671.5)"/><ellipse cx="960.3" cy="660.0" rx="4.0" ry="1.2" fill="#2a241e" opacity="0.533951000833414" transform="rotate(-23.792817392822933 960.3 660.0)"/><ellipse cx="901.2" cy="667.6" rx="2.5" ry="1.4" fill="#332b24" opacity="0.5109820549473932" transform="rotate(-18.402900721703734 901.2 667.6)"/><ellipse cx="955.8" cy="658.3" rx="4.8" ry="1.7" fill="#241f1a" opacity="0.7795356436505911" transform="rotate(-14.424011715282813 955.8 658.3)"/><ellipse cx="979.8" cy="653.1" rx="4.6" ry="2.2" fill="#332b24" opacity="0.5707435902592356" transform="rotate(-22.686621016544258 979.8 653.1)"/><ellipse cx="906.7" cy="641.9" rx="3.8" ry="1.8" fill="#332b24" opacity="0.6584770932867746" transform="rotate(-10.559654816128603 906.7 641.9)"/></g>
<rect x="451" y="709" width="644" height="88" fill="url(#tr)"/>
<polygon points="944.0,641.0 944.3,644.5 948.2,664.6 946.6,668.1 950.6,688.2 947.9,691.7 952.6,711.8 949.0,715.3 954.4,735.4 950.0,738.9 956.0,759.0 956.0,759.0 932.0,759.0 932.0,759.0 938.0,738.9 933.6,735.4 939.0,715.3 935.4,711.8 940.1,691.7 937.4,688.2 941.4,668.1 939.8,664.6 943.7,644.5" fill="#1a1612"/><polygon points="926.0,652.0 926.3,655.2 929.5,673.4 928.2,676.6 931.5,694.8 929.3,698.0 933.2,716.2 930.2,719.4 934.6,737.6 931.1,740.8 936.0,759.0 936.0,759.0 916.0,759.0 916.0,759.0 920.9,740.8 917.4,737.6 921.8,719.4 918.8,716.2 922.7,698.0 920.5,694.8 923.8,676.6 922.5,673.4 925.7,655.2" fill="#1a1612"/><polygon points="967.0,682.0 967.3,684.3 970.2,697.4 969.0,699.7 972.0,712.8 970.0,715.1 973.5,728.2 970.9,730.5 974.8,743.6 971.6,745.9 976.0,759.0 976.0,759.0 958.0,759.0 958.0,759.0 962.4,745.9 959.2,743.6 963.1,730.5 960.5,728.2 964.0,715.1 962.0,712.8 965.0,699.7 963.8,697.4 966.7,684.3" fill="#1a1612"/><polygon points="984.0,687.0 984.3,689.2 987.2,701.4 986.0,703.6 989.0,715.8 987.0,718.0 990.5,730.2 987.9,732.4 991.8,744.6 988.6,746.8 993.0,759.0 993.0,759.0 975.0,759.0 975.0,759.0 979.4,746.8 976.2,744.6 980.1,732.4 977.5,730.2 981.0,718.0 979.0,715.8 982.0,703.6 980.8,701.4 983.7,689.2" fill="#1a1612"/><polygon points="1005.0,674.0 1005.3,676.5 1008.5,691.0 1007.2,693.5 1010.5,708.0 1008.3,710.5 1012.2,725.0 1009.2,727.5 1013.6,742.0 1010.1,744.5 1015.0,759.0 1015.0,759.0 995.0,759.0 995.0,759.0 999.9,744.5 996.4,742.0 1000.8,727.5 997.8,725.0 1001.7,710.5 999.5,708.0 1002.8,693.5 1001.5,691.0 1004.7,676.5" fill="#1a1612"/><polygon points="1021.0,676.0 1021.3,678.5 1024.2,692.6 1023.0,695.1 1026.0,709.2 1024.0,711.7 1027.5,725.8 1024.9,728.3 1028.8,742.4 1025.6,744.9 1030.0,759.0 1030.0,759.0 1012.0,759.0 1012.0,759.0 1016.4,744.9 1013.2,742.4 1017.1,728.3 1014.5,725.8 1018.0,711.7 1016.0,709.2 1019.0,695.1 1017.8,692.6 1020.7,678.5" fill="#1a1612"/><polygon points="1032.0,679.0 1032.3,681.4 1034.8,695.0 1033.8,697.4 1036.4,711.0 1034.7,713.4 1037.7,727.0 1035.5,729.4 1038.9,743.0 1036.1,745.4 1040.0,759.0 1040.0,759.0 1024.0,759.0 1024.0,759.0 1027.9,745.4 1025.1,743.0 1028.5,729.4 1026.3,727.0 1029.3,713.4 1027.6,711.0 1030.2,697.4 1029.2,695.0 1031.7,681.4" fill="#1a1612"/><polygon points="1045.0,695.0 1045.3,696.9 1047.8,707.8 1046.8,709.7 1049.4,720.6 1047.7,722.5 1050.7,733.4 1048.5,735.3 1051.9,746.2 1049.1,748.1 1053.0,759.0 1053.0,759.0 1037.0,759.0 1037.0,759.0 1040.9,748.1 1038.1,746.2 1041.5,735.3 1039.3,733.4 1042.3,722.5 1040.6,720.6 1043.2,709.7 1042.2,707.8 1044.7,696.9" fill="#1a1612"/><polygon points="1065.0,677.0 1065.3,679.5 1068.5,693.4 1067.2,695.9 1070.5,709.8 1068.3,712.3 1072.2,726.2 1069.2,728.7 1073.6,742.6 1070.1,745.1 1075.0,759.0 1075.0,759.0 1055.0,759.0 1055.0,759.0 1059.9,745.1 1056.4,742.6 1060.8,728.7 1057.8,726.2 1061.7,712.3 1059.5,709.8 1062.8,695.9 1061.5,693.4 1064.7,679.5" fill="#1a1612"/><polygon points="1077.0,667.0 1077.3,669.8 1080.5,685.4 1079.2,688.2 1082.5,703.8 1080.3,706.6 1084.2,722.2 1081.2,725.0 1085.6,740.6 1082.1,743.4 1087.0,759.0 1087.0,759.0 1067.0,759.0 1067.0,759.0 1071.9,743.4 1068.4,740.6 1072.8,725.0 1069.8,722.2 1073.7,706.6 1071.5,703.8 1074.8,688.2 1073.5,685.4 1076.7,669.8" fill="#1a1612"/><polygon points="1091.0,674.0 1091.3,676.5 1094.5,691.0 1093.2,693.5 1096.5,708.0 1094.3,710.5 1098.2,725.0 1095.2,727.5 1099.6,742.0 1096.1,744.5 1101.0,759.0 1101.0,759.0 1081.0,759.0 1081.0,759.0 1085.9,744.5 1082.4,742.0 1086.8,727.5 1083.8,725.0 1087.7,710.5 1085.5,708.0 1088.8,693.5 1087.5,691.0 1090.7,676.5" fill="#1a1612"/><polygon points="846.0,681.0 846.3,683.3 849.2,696.6 848.0,698.9 851.0,712.2 849.0,714.5 852.5,727.8 849.9,730.1 853.8,743.4 850.6,745.7 855.0,759.0 855.0,759.0 837.0,759.0 837.0,759.0 841.4,745.7 838.2,743.4 842.1,730.1 839.5,727.8 843.0,714.5 841.0,712.2 844.0,698.9 842.8,696.6 845.7,683.3" fill="#1a1612"/><polygon points="858.0,687.0 858.3,689.2 860.8,701.4 859.8,703.6 862.4,715.8 860.7,718.0 863.7,730.2 861.5,732.4 864.9,744.6 862.1,746.8 866.0,759.0 866.0,759.0 850.0,759.0 850.0,759.0 853.9,746.8 851.1,744.6 854.5,732.4 852.3,730.2 855.3,718.0 853.6,715.8 856.2,703.6 855.2,701.4 857.7,689.2" fill="#1a1612"/><polygon points="869.0,695.0 869.3,696.9 871.8,707.8 870.8,709.7 873.4,720.6 871.7,722.5 874.7,733.4 872.5,735.3 875.9,746.2 873.1,748.1 877.0,759.0 877.0,759.0 861.0,759.0 861.0,759.0 864.9,748.1 862.1,746.2 865.5,735.3 863.3,733.4 866.3,722.5 864.6,720.6 867.2,709.7 866.2,707.8 868.7,696.9" fill="#1a1612"/><polygon points="451.0,702.8 451.3,704.6 454.0,715.0 453.0,716.8 455.8,727.3 453.9,729.1 457.2,739.5 454.7,741.3 458.5,751.8 455.4,753.6 459.7,764.0 459.7,764.0 442.3,764.0 442.3,764.0 446.6,753.6 443.5,751.8 447.3,741.3 444.8,739.5 448.1,729.1 446.2,727.3 449.0,716.8 448.0,715.0 450.7,704.6" fill="#17130f"/><polygon points="457.4,713.2 457.7,714.8 460.0,723.4 459.1,724.9 461.5,733.5 460.0,735.1 462.8,743.7 460.6,745.2 463.9,753.8 461.3,755.4 464.9,764.0 464.9,764.0 449.8,764.0 449.8,764.0 453.5,755.4 450.8,753.8 454.1,745.2 451.9,743.7 454.8,735.1 453.2,733.5 455.6,724.9 454.7,723.4 457.1,714.8" fill="#211c17"/><polygon points="463.8,707.0 464.1,708.7 466.4,718.4 465.5,720.1 467.9,729.8 466.4,731.5 469.2,741.2 467.1,742.9 470.3,752.6 467.7,754.3 471.3,764.0 471.3,764.0 456.2,764.0 456.2,764.0 459.9,754.3 457.2,752.6 460.5,742.9 458.4,741.2 461.2,731.5 459.6,729.8 462.0,720.1 461.1,718.4 463.5,708.7" fill="#17130f"/><polygon points="469.7,693.4 470.0,695.5 473.0,707.5 471.8,709.6 474.9,721.6 472.9,723.7 476.5,735.7 473.7,737.9 477.8,749.9 474.5,752.0 479.1,764.0 479.1,764.0 460.3,764.0 460.3,764.0 464.9,752.0 461.5,749.9 465.7,737.9 462.9,735.7 466.5,723.7 464.5,721.6 467.6,709.6 466.4,707.5 469.4,695.5" fill="#211c17"/><polygon points="476.6,706.5 476.9,708.2 479.5,718.0 478.5,719.7 481.1,729.5 479.4,731.2 482.5,741.0 480.1,742.7 483.7,752.5 480.8,754.2 484.8,764.0 484.8,764.0 468.4,764.0 468.4,764.0 472.4,754.2 469.5,752.5 473.1,742.7 470.7,741.0 473.8,731.2 472.1,729.5 474.7,719.7 473.7,718.0 476.3,708.2" fill="#17130f"/><polygon points="483.6,707.0 483.9,708.7 486.2,718.4 485.3,720.1 487.7,729.8 486.1,731.5 488.9,741.2 486.8,742.9 490.0,752.6 487.4,754.3 491.0,764.0 491.0,764.0 476.1,764.0 476.1,764.0 479.7,754.3 477.1,752.6 480.3,742.9 478.2,741.2 481.0,731.5 479.4,729.8 481.8,720.1 480.9,718.4 483.3,708.7" fill="#1c1814"/><polygon points="491.1,692.6 491.4,694.8 493.5,706.9 492.7,709.1 495.0,721.2 493.5,723.3 496.2,735.5 494.2,737.6 497.2,749.7 494.7,751.9 498.2,764.0 498.2,764.0 483.9,764.0 483.9,764.0 487.4,751.9 484.9,749.7 487.9,737.6 486.0,735.5 488.6,723.3 487.1,721.2 489.4,709.1 488.6,706.9 490.8,694.8" fill="#1c1814"/><polygon points="497.9,711.2 498.2,712.8 500.7,721.8 499.7,723.4 502.3,732.3 500.6,733.9 503.6,742.9 501.3,744.5 504.8,753.4 501.9,755.0 505.8,764.0 505.8,764.0 489.9,764.0 489.9,764.0 493.8,755.0 491.0,753.4 494.4,744.5 492.1,742.9 495.1,733.9 493.5,732.3 496.0,723.4 495.0,721.8 497.6,712.8" fill="#211c17"/><polygon points="505.4,704.5 505.7,706.3 508.5,716.4 507.4,718.2 510.3,728.3 508.4,730.1 511.8,740.2 509.2,742.0 513.1,752.1 509.9,753.9 514.3,764.0 514.3,764.0 496.5,764.0 496.5,764.0 500.8,753.9 497.7,752.1 501.6,742.0 499.0,740.2 502.4,730.1 500.5,728.3 503.4,718.2 502.2,716.4 505.1,706.3" fill="#17130f"/><polygon points="510.4,693.2 510.7,695.3 513.5,707.4 512.4,709.5 515.3,721.5 513.4,723.6 516.8,735.7 514.2,737.8 518.1,749.8 515.0,752.0 519.4,764.0 519.4,764.0 501.4,764.0 501.4,764.0 505.8,752.0 502.6,749.8 506.6,737.8 504.0,735.7 507.4,723.6 505.5,721.5 508.4,709.5 507.2,707.4 510.1,695.3" fill="#17130f"/><polygon points="518.4,716.9 518.7,718.3 521.7,726.3 520.5,727.7 523.6,735.7 521.6,737.1 525.2,745.2 522.4,746.6 526.6,754.6 523.2,756.0 527.9,764.0 527.9,764.0 508.9,764.0 508.9,764.0 513.6,756.0 510.2,754.6 514.3,746.6 511.6,745.2 515.2,737.1 513.1,735.7 516.2,727.7 515.0,726.3 518.1,718.3" fill="#211c17"/><polygon points="524.1,710.7 524.4,712.3 527.1,721.4 526.1,723.0 528.9,732.0 527.0,733.6 530.3,742.7 527.8,744.3 531.5,753.3 528.5,754.9 532.7,764.0 532.7,764.0 515.6,764.0 515.6,764.0 519.8,754.9 516.8,753.3 520.5,744.3 518.0,742.7 521.3,733.6 519.4,732.0 522.2,723.0 521.1,721.4 523.8,712.3" fill="#1c1814"/><polygon points="529.4,710.9 529.7,712.5 532.2,721.5 531.2,723.1 533.9,732.2 532.1,733.7 535.2,742.8 532.9,744.4 536.5,753.4 533.6,755.0 537.6,764.0 537.6,764.0 521.2,764.0 521.2,764.0 525.2,755.0 522.3,753.4 525.8,744.4 523.5,742.8 526.6,733.7 524.8,732.2 527.5,723.1 526.5,721.5 529.1,712.5" fill="#17130f"/><polygon points="535.5,715.9 535.8,717.4 538.9,725.5 537.7,727.0 540.8,735.1 538.7,736.6 542.4,744.8 539.6,746.2 543.8,754.4 540.4,755.8 545.1,764.0 545.1,764.0 526.0,764.0 526.0,764.0 530.7,755.8 527.3,754.4 531.5,746.2 528.7,744.8 532.3,736.6 530.3,735.1 533.4,727.0 532.2,725.5 535.2,717.4" fill="#1c1814"/><polygon points="541.2,715.1 541.5,716.6 543.7,724.9 542.8,726.3 545.1,734.7 543.6,736.1 546.3,744.4 544.3,745.9 547.3,754.2 544.9,755.7 548.3,764.0 548.3,764.0 534.0,764.0 534.0,764.0 537.5,755.7 535.0,754.2 538.0,745.9 536.0,744.4 538.7,736.1 537.2,734.7 539.5,726.3 538.6,724.9 540.9,716.6" fill="#17130f"/><polygon points="549.1,701.3 549.4,703.2 551.6,713.9 550.8,715.7 553.1,726.4 551.6,728.3 554.3,738.9 552.2,740.8 555.3,751.5 552.8,753.3 556.3,764.0 556.3,764.0 541.9,764.0 541.9,764.0 545.4,753.3 542.9,751.5 546.0,740.8 543.9,738.9 546.6,728.3 545.1,726.4 547.4,715.7 546.6,713.9 548.8,703.2" fill="#211c17"/><polygon points="554.7,708.5 555.0,710.2 557.5,719.6 556.5,721.3 559.1,730.7 557.4,732.4 560.4,741.8 558.2,743.5 561.6,752.9 558.8,754.6 562.7,764.0 562.7,764.0 546.7,764.0 546.7,764.0 550.6,754.6 547.8,752.9 551.2,743.5 548.9,741.8 552.0,732.4 550.3,730.7 552.8,721.3 551.9,719.6 554.4,710.2" fill="#17130f"/><polygon points="560.7,716.1 561.0,717.5 564.0,725.7 562.8,727.1 565.8,735.2 563.8,736.7 567.3,744.8 564.7,746.3 568.7,754.4 565.4,755.9 570.0,764.0 570.0,764.0 551.4,764.0 551.4,764.0 556.0,755.9 552.7,754.4 556.7,746.3 554.0,744.8 557.6,736.7 555.6,735.2 558.6,727.1 557.4,725.7 560.4,717.5" fill="#1c1814"/><polygon points="566.1,709.4 566.4,711.0 568.6,720.3 567.8,721.9 570.0,731.2 568.5,732.9 571.1,742.2 569.2,743.8 572.2,753.1 569.7,754.7 573.1,764.0 573.1,764.0 559.1,764.0 559.1,764.0 562.5,754.7 560.0,753.1 563.0,743.8 561.1,742.2 563.7,732.9 562.2,731.2 564.4,721.9 563.6,720.3 565.8,711.0" fill="#17130f"/><polygon points="573.5,695.6 573.8,697.7 576.5,709.3 575.5,711.3 578.3,723.0 576.4,725.0 579.7,736.6 577.2,738.7 581.0,750.3 577.9,752.4 582.2,764.0 582.2,764.0 564.8,764.0 564.8,764.0 569.1,752.4 566.0,750.3 569.8,738.7 567.3,736.6 570.6,725.0 568.7,723.0 571.5,711.3 570.4,709.3 573.2,697.7" fill="#17130f"/><polygon points="580.0,716.6 580.3,718.0 583.3,726.1 582.1,727.5 585.1,735.6 583.1,737.0 586.7,745.0 584.0,746.5 588.1,754.5 584.7,755.9 589.3,764.0 589.3,764.0 570.7,764.0 570.7,764.0 575.3,755.9 572.0,754.5 576.0,746.5 573.3,745.0 576.9,737.0 574.9,735.6 577.9,727.5 576.7,726.1 579.7,718.0" fill="#17130f"/><polygon points="586.9,694.0 587.2,696.1 589.8,708.0 588.8,710.1 591.5,722.0 589.8,724.1 592.9,736.0 590.5,738.1 594.1,750.0 591.2,752.1 595.2,764.0 595.2,764.0 578.7,764.0 578.7,764.0 582.7,752.1 579.8,750.0 583.4,738.1 581.0,736.0 584.1,724.1 582.4,722.0 585.0,710.1 584.0,708.0 586.6,696.1" fill="#1c1814"/><polygon points="591.9,713.5 592.2,715.0 595.4,723.6 594.2,725.1 597.4,733.7 595.3,735.2 599.1,743.8 596.2,745.3 600.5,753.9 597.0,755.4 601.9,764.0 601.9,764.0 582.0,764.0 582.0,764.0 586.9,755.4 583.4,753.9 587.7,745.3 584.8,743.8 588.6,735.2 586.5,733.7 589.7,725.1 588.5,723.6 591.6,715.0" fill="#211c17"/><polygon points="597.9,714.0 598.2,715.5 600.5,724.0 599.6,725.5 602.1,734.0 600.5,735.5 603.3,744.0 601.2,745.5 604.5,754.0 601.8,755.5 605.5,764.0 605.5,764.0 590.2,764.0 590.2,764.0 593.9,755.5 591.3,754.0 594.5,745.5 592.4,744.0 595.2,735.5 593.7,734.0 596.1,725.5 595.2,724.0 597.6,715.5" fill="#17130f"/><polygon points="605.8,706.7 606.1,708.4 608.9,718.1 607.8,719.8 610.7,729.6 608.8,731.3 612.1,741.1 609.6,742.8 613.4,752.5 610.3,754.3 614.6,764.0 614.6,764.0 597.1,764.0 597.1,764.0 601.4,754.3 598.3,752.5 602.1,742.8 599.6,741.1 602.9,731.3 601.0,729.6 603.9,719.8 602.8,718.1 605.5,708.4" fill="#1c1814"/><polygon points="613.8,696.5 614.1,698.6 616.5,710.0 615.6,712.1 618.1,723.5 616.5,725.6 619.4,737.0 617.2,739.0 620.5,750.5 617.8,752.5 621.6,764.0 621.6,764.0 606.0,764.0 606.0,764.0 609.8,752.5 607.1,750.5 610.4,739.0 608.2,737.0 611.2,725.6 609.5,723.5 612.0,712.1 611.1,710.0 613.5,698.6" fill="#211c17"/><polygon points="619.8,698.7 620.1,700.7 622.3,711.8 621.5,713.7 623.8,724.8 622.3,726.8 625.0,737.9 623.0,739.8 626.0,750.9 623.5,752.9 627.0,764.0 627.0,764.0 612.6,764.0 612.6,764.0 616.1,752.9 613.6,750.9 616.7,739.8 614.6,737.9 617.3,726.8 615.8,724.8 618.1,713.7 617.3,711.8 619.5,700.7" fill="#1c1814"/><polygon points="625.4,707.6 625.7,709.2 627.9,718.8 627.1,720.5 629.3,730.1 627.9,731.8 630.5,741.4 628.5,743.1 631.5,752.7 629.1,754.4 632.5,764.0 632.5,764.0 618.4,764.0 618.4,764.0 621.8,754.4 619.3,752.7 622.3,743.1 620.4,741.4 623.0,731.8 621.5,730.1 623.8,720.5 623.0,718.8 625.1,709.2" fill="#17130f"/><polygon points="631.5,702.8 631.8,704.6 635.0,715.0 633.8,716.9 637.0,727.3 634.8,729.1 638.6,739.5 635.7,741.3 640.1,751.8 636.5,753.6 641.4,764.0 641.4,764.0 621.7,764.0 621.7,764.0 626.5,753.6 623.0,751.8 627.3,741.3 624.5,739.5 628.2,729.1 626.1,727.3 629.3,716.9 628.1,715.0 631.2,704.6" fill="#17130f"/><polygon points="639.0,694.5 639.3,696.6 641.9,708.4 640.9,710.5 643.5,722.3 641.8,724.4 644.9,736.2 642.6,738.3 646.1,750.1 643.2,752.2 647.2,764.0 647.2,764.0 630.9,764.0 630.9,764.0 634.9,752.2 632.0,750.1 635.5,738.3 633.2,736.2 636.3,724.4 634.5,722.3 637.2,710.5 636.2,708.4 638.7,696.6" fill="#211c17"/><polygon points="644.5,714.6 644.8,716.1 647.8,724.5 646.6,726.0 649.7,734.4 647.7,735.9 651.3,744.2 648.5,745.7 652.7,754.1 649.3,755.6 654.0,764.0 654.0,764.0 635.0,764.0 635.0,764.0 639.7,755.6 636.3,754.1 640.5,745.7 637.7,744.2 641.3,735.9 639.3,734.4 642.4,726.0 641.2,724.5 644.2,716.1" fill="#1c1814"/><polygon points="651.7,695.1 652.0,697.2 654.8,708.9 653.7,711.0 656.6,722.7 654.7,724.7 658.1,736.4 655.5,738.5 659.4,750.2 656.2,752.3 660.6,764.0 660.6,764.0 642.8,764.0 642.8,764.0 647.2,752.3 644.0,750.2 647.9,738.5 645.3,736.4 648.7,724.7 646.8,722.7 649.7,711.0 648.6,708.9 651.4,697.2" fill="#211c17"/><polygon points="657.3,715.7 657.6,717.2 660.7,725.4 659.4,726.8 662.6,735.0 660.5,736.5 664.2,744.7 661.4,746.1 665.6,754.3 662.2,755.8 666.9,764.0 666.9,764.0 647.6,764.0 647.6,764.0 652.4,755.8 648.9,754.3 653.2,746.1 650.3,744.7 654.0,736.5 652.0,735.0 655.1,726.8 653.9,725.4 657.0,717.2" fill="#211c17"/><polygon points="662.5,692.2 662.8,694.4 665.1,706.6 664.2,708.7 666.5,720.9 665.0,723.1 667.8,735.3 665.7,737.4 668.8,749.6 666.3,751.8 669.8,764.0 669.8,764.0 655.2,764.0 655.2,764.0 658.7,751.8 656.2,749.6 659.3,737.4 657.2,735.3 660.0,723.1 658.5,720.9 660.8,708.7 659.9,706.6 662.2,694.4" fill="#211c17"/><polygon points="670.4,697.2 670.7,699.2 673.6,710.6 672.5,712.6 675.4,723.9 673.5,725.9 676.9,737.3 674.3,739.3 678.3,750.6 675.0,752.6 679.5,764.0 679.5,764.0 661.3,764.0 661.3,764.0 665.8,752.6 662.5,750.6 666.5,739.3 663.9,737.3 667.3,725.9 665.4,723.9 668.3,712.6 667.2,710.6 670.1,699.2" fill="#17130f"/><polygon points="676.7,714.5 677.0,716.0 679.6,724.4 678.6,725.9 681.3,734.3 679.5,735.8 682.7,744.2 680.3,745.7 684.0,754.1 681.0,755.6 685.1,764.0 685.1,764.0 668.2,764.0 668.2,764.0 672.3,755.6 669.3,754.1 673.0,745.7 670.6,744.2 673.8,735.8 672.0,734.3 674.7,725.9 673.7,724.4 676.4,716.0" fill="#211c17"/><polygon points="682.2,709.7 682.5,711.4 684.7,720.6 683.9,722.2 686.2,731.4 684.7,733.1 687.4,742.3 685.3,743.9 688.4,753.1 685.9,754.8 689.4,764.0 689.4,764.0 675.0,764.0 675.0,764.0 678.5,754.8 675.9,753.1 679.0,743.9 677.0,742.3 679.7,733.1 678.2,731.4 680.5,722.2 679.6,720.6 681.9,711.4" fill="#1c1814"/><polygon points="688.6,708.0 688.9,709.7 691.7,719.2 690.6,720.9 693.5,730.4 691.6,732.1 695.0,741.6 692.4,743.3 696.3,752.8 693.1,754.5 697.5,764.0 697.5,764.0 679.8,764.0 679.8,764.0 684.1,754.5 681.0,752.8 684.8,743.3 682.3,741.6 685.6,732.1 683.7,730.4 686.6,720.9 685.5,719.2 688.3,709.7" fill="#1c1814"/><polygon points="694.5,714.9 694.8,716.3 697.1,724.7 696.2,726.2 698.7,734.5 697.1,736.0 699.9,744.3 697.8,745.8 701.0,754.2 698.4,755.6 702.1,764.0 702.1,764.0 686.8,764.0 686.8,764.0 690.5,755.6 687.9,754.2 691.2,745.8 689.0,744.3 691.9,736.0 690.3,734.5 692.7,726.2 691.8,724.7 694.2,716.3" fill="#1c1814"/><polygon points="699.7,701.7 700.0,703.6 702.4,714.2 701.5,716.0 703.9,726.6 702.3,728.5 705.2,739.1 703.0,740.9 706.4,751.5 703.7,753.4 707.4,764.0 707.4,764.0 691.9,764.0 691.9,764.0 695.7,753.4 693.0,751.5 696.3,740.9 694.1,739.1 697.0,728.5 695.4,726.6 697.9,716.0 696.9,714.2 699.4,703.6" fill="#1c1814"/><polygon points="705.2,700.6 705.5,702.5 708.3,713.3 707.2,715.2 710.0,726.0 708.1,727.9 711.4,738.6 708.9,740.5 712.7,751.3 709.6,753.2 713.9,764.0 713.9,764.0 696.5,764.0 696.5,764.0 700.7,753.2 697.7,751.3 701.5,740.5 698.9,738.6 702.3,727.9 700.4,726.0 703.2,715.2 702.1,713.3 704.9,702.5" fill="#1c1814"/><polygon points="710.5,694.6 710.8,696.7 713.4,708.5 712.4,710.6 715.1,722.4 713.3,724.4 716.5,736.2 714.1,738.3 717.7,750.1 714.7,752.2 718.8,764.0 718.8,764.0 702.1,764.0 702.1,764.0 706.2,752.2 703.2,750.1 706.9,738.3 704.5,736.2 707.6,724.4 705.9,722.4 708.6,710.6 707.5,708.5 710.2,696.7" fill="#17130f"/><polygon points="717.4,709.0 717.7,710.6 720.5,720.0 719.4,721.6 722.3,731.0 720.4,732.6 723.7,742.0 721.2,743.6 725.0,753.0 721.9,754.6 726.2,764.0 726.2,764.0 708.7,764.0 708.7,764.0 713.0,754.6 709.9,753.0 713.7,743.6 711.2,742.0 714.5,732.6 712.6,731.0 715.5,721.6 714.4,720.0 717.1,710.6" fill="#1c1814"/><polygon points="724.2,715.0 724.5,716.5 727.2,724.8 726.1,726.3 728.9,734.6 727.1,736.1 730.3,744.4 727.8,745.9 731.5,754.2 728.5,755.7 732.6,764.0 732.6,764.0 715.8,764.0 715.8,764.0 719.9,755.7 716.9,754.2 720.6,745.9 718.2,744.4 721.4,736.1 719.6,734.6 722.3,726.3 721.3,724.8 723.9,716.5" fill="#17130f"/><polygon points="731.3,716.0 731.6,717.5 733.8,725.6 733.0,727.1 735.2,735.2 733.8,736.7 736.4,744.8 734.4,746.3 737.4,754.4 735.0,755.8 738.4,764.0 738.4,764.0 724.3,764.0 724.3,764.0 727.7,755.8 725.2,754.4 728.2,746.3 726.2,744.8 728.9,736.7 727.4,735.2 729.7,727.1 728.8,725.6 731.0,717.5" fill="#211c17"/><polygon points="736.5,692.7 736.8,694.9 739.3,707.0 738.4,709.1 740.9,721.2 739.2,723.4 742.2,735.5 740.0,737.6 743.4,749.7 740.6,751.9 744.5,764.0 744.5,764.0 728.6,764.0 728.6,764.0 732.5,751.9 729.7,749.7 733.1,737.6 730.8,735.5 733.8,723.4 732.2,721.2 734.7,709.1 733.8,707.0 736.2,694.9" fill="#1c1814"/><polygon points="744.5,693.0 744.8,695.1 747.6,707.2 746.5,709.3 749.3,721.4 747.5,723.5 750.7,735.6 748.2,737.7 752.0,749.8 748.9,751.9 753.2,764.0 753.2,764.0 735.9,764.0 735.9,764.0 740.1,751.9 737.1,749.8 740.8,737.7 738.3,735.6 741.6,723.5 739.8,721.4 742.6,709.3 741.5,707.2 744.2,695.1" fill="#211c17"/><polygon points="749.7,715.3 750.0,716.8 752.9,725.1 751.8,726.5 754.7,734.8 752.8,736.3 756.3,744.5 753.6,746.0 757.6,754.3 754.4,755.7 758.9,764.0 758.9,764.0 740.5,764.0 740.5,764.0 745.0,755.7 741.7,754.3 745.7,746.0 743.1,744.5 746.6,736.3 744.6,734.8 747.6,726.5 746.4,725.1 749.4,716.8" fill="#1c1814"/><polygon points="757.1,714.8 757.4,716.3 759.9,724.6 758.9,726.1 761.5,734.5 759.8,736.0 762.8,744.3 760.5,745.8 764.0,754.2 761.2,755.6 765.1,764.0 765.1,764.0 749.0,764.0 749.0,764.0 752.9,755.6 750.1,754.2 753.6,745.8 751.3,744.3 754.3,736.0 752.6,734.5 755.2,726.1 754.2,724.6 756.8,716.3" fill="#211c17"/><polygon points="763.5,693.0 763.8,695.1 766.8,707.2 765.6,709.3 768.7,721.4 766.7,723.5 770.3,735.6 767.5,737.7 771.8,749.8 768.3,751.9 773.0,764.0 773.0,764.0 753.9,764.0 753.9,764.0 758.6,751.9 755.2,749.8 759.4,737.7 756.6,735.6 760.3,723.5 758.2,721.4 761.3,709.3 760.1,707.2 763.2,695.1" fill="#1c1814"/><polygon points="771.1,705.9 771.4,707.6 774.2,717.5 773.1,719.3 776.0,729.1 774.1,730.9 777.4,740.8 774.9,742.5 778.7,752.4 775.6,754.1 779.9,764.0 779.9,764.0 762.2,764.0 762.2,764.0 766.5,754.1 763.4,752.4 767.3,742.5 764.7,740.8 768.1,730.9 766.2,729.1 769.0,719.3 767.9,717.5 770.8,707.6" fill="#17130f"/><polygon points="777.2,691.3 777.5,693.5 779.7,705.9 778.9,708.0 781.2,720.4 779.7,722.6 782.4,734.9 780.3,737.1 783.4,749.5 780.9,751.6 784.4,764.0 784.4,764.0 770.0,764.0 770.0,764.0 773.5,751.6 771.0,749.5 774.1,737.1 772.0,734.9 774.7,722.6 773.2,720.4 775.5,708.0 774.7,705.9 776.9,693.5" fill="#1c1814"/><polygon points="784.1,716.8 784.4,718.2 787.5,726.3 786.3,727.7 789.4,735.7 787.3,737.1 791.0,745.1 788.2,746.5 792.5,754.6 789.0,756.0 793.8,764.0 793.8,764.0 774.5,764.0 774.5,764.0 779.2,756.0 775.8,754.6 780.0,746.5 777.2,745.1 780.9,737.1 778.8,735.7 782.0,727.7 780.7,726.3 783.8,718.2" fill="#211c17"/><polygon points="790.1,715.3 790.4,716.8 793.3,725.0 792.2,726.5 795.1,734.8 793.2,736.2 796.6,744.5 794.0,746.0 798.0,754.3 794.7,755.7 799.2,764.0 799.2,764.0 781.0,764.0 781.0,764.0 785.5,755.7 782.3,754.3 786.2,746.0 783.6,744.5 787.1,736.2 785.1,734.8 788.1,726.5 786.9,725.0 789.8,716.8" fill="#17130f"/><polygon points="796.4,712.8 796.7,714.3 799.0,723.0 798.1,724.6 800.4,733.3 798.9,734.8 801.6,743.5 799.6,745.1 802.7,753.8 800.2,755.3 803.7,764.0 803.7,764.0 789.2,764.0 789.2,764.0 792.7,755.3 790.2,753.8 793.3,745.1 791.2,743.5 793.9,734.8 792.4,733.3 794.7,724.6 793.9,723.0 796.1,714.3" fill="#211c17"/><polygon points="801.5,706.6 801.8,708.4 804.5,718.1 803.4,719.8 806.2,729.6 804.4,731.3 807.6,741.1 805.2,742.8 808.8,752.5 805.8,754.2 810.0,764.0 810.0,764.0 793.1,764.0 793.1,764.0 797.2,754.2 794.2,752.5 797.9,742.8 795.5,741.1 798.7,731.3 796.9,729.6 799.6,719.8 798.6,718.1 801.2,708.4" fill="#1c1814"/><polygon points="809.4,693.9 809.7,696.0 812.7,707.9 811.5,710.0 814.5,722.0 812.5,724.1 816.1,736.0 813.4,738.1 817.5,750.0 814.1,752.1 818.7,764.0 818.7,764.0 800.1,764.0 800.1,764.0 804.6,752.1 801.3,750.0 805.4,738.1 802.7,736.0 806.3,724.1 804.2,722.0 807.3,710.0 806.1,707.9 809.1,696.0" fill="#211c17"/><polygon points="817.2,697.7 817.5,699.6 819.6,710.9 818.8,712.9 821.0,724.2 819.6,726.2 822.2,737.5 820.2,739.5 823.2,750.7 820.8,752.7 824.2,764.0 824.2,764.0 810.1,764.0 810.1,764.0 813.5,752.7 811.1,750.7 814.1,739.5 812.1,737.5 814.7,726.2 813.3,724.2 815.5,712.9 814.7,710.9 816.9,699.6" fill="#17130f"/><polygon points="822.6,706.9 822.9,708.6 825.6,718.3 824.5,720.0 827.3,729.7 825.5,731.5 828.7,741.2 826.3,742.9 830.0,752.6 827.0,754.3 831.1,764.0 831.1,764.0 814.0,764.0 814.0,764.0 818.2,754.3 815.2,752.6 818.9,742.9 816.4,741.2 819.7,731.5 817.9,729.7 820.6,720.0 819.6,718.3 822.3,708.6" fill="#17130f"/><polygon points="829.6,702.5 829.9,704.3 833.0,714.8 831.7,716.6 834.9,727.1 832.8,728.9 836.5,739.4 833.7,741.2 837.9,751.7 834.5,753.5 839.2,764.0 839.2,764.0 819.9,764.0 819.9,764.0 824.7,753.5 821.2,751.7 825.4,741.2 822.6,739.4 826.3,728.9 824.2,727.1 827.4,716.6 826.2,714.8 829.3,704.3" fill="#17130f"/><polygon points="835.8,697.5 836.1,699.5 838.9,710.8 837.8,712.8 840.7,724.1 838.8,726.1 842.2,737.4 839.6,739.4 843.5,750.7 840.3,752.7 844.7,764.0 844.7,764.0 826.9,764.0 826.9,764.0 831.2,752.7 828.1,750.7 832.0,739.4 829.4,737.4 832.8,726.1 830.9,724.1 833.8,712.8 832.6,710.8 835.5,699.5" fill="#1c1814"/><polygon points="843.4,701.0 843.7,702.9 846.5,713.6 845.4,715.5 848.2,726.2 846.4,728.1 849.7,738.8 847.2,740.7 851.0,751.4 847.9,753.3 852.2,764.0 852.2,764.0 834.7,764.0 834.7,764.0 839.0,753.3 835.8,751.4 839.7,740.7 837.1,738.8 840.5,728.1 838.6,726.2 841.4,715.5 840.3,713.6 843.1,702.9" fill="#17130f"/><polygon points="849.0,694.5 849.3,696.6 851.9,708.4 850.9,710.5 853.5,722.3 851.8,724.4 854.8,736.2 852.5,738.3 856.0,750.1 853.2,752.2 857.1,764.0 857.1,764.0 841.0,764.0 841.0,764.0 844.9,752.2 842.1,750.1 845.6,738.3 843.3,736.2 846.3,724.4 844.6,722.3 847.2,710.5 846.2,708.4 848.7,696.6" fill="#1c1814"/><polygon points="856.2,715.7 856.5,717.1 858.9,725.4 858.0,726.8 860.5,735.0 858.9,736.5 861.8,744.7 859.6,746.1 863.0,754.3 860.2,755.8 864.0,764.0 864.0,764.0 848.3,764.0 848.3,764.0 852.2,755.8 849.4,754.3 852.8,746.1 850.6,744.7 853.5,736.5 851.9,735.0 854.4,726.8 853.4,725.4 855.9,717.1" fill="#1c1814"/><polygon points="861.5,703.3 861.8,705.1 865.0,715.4 863.7,717.2 866.9,727.6 864.8,729.4 868.5,739.7 865.7,741.5 870.0,751.9 866.5,753.7 871.3,764.0 871.3,764.0 851.7,764.0 851.7,764.0 856.6,753.7 853.1,751.9 857.4,741.5 854.5,739.7 858.3,729.4 856.1,727.6 859.3,717.2 858.1,715.4 861.2,705.1" fill="#17130f"/><polygon points="867.7,704.5 868.0,706.3 870.8,716.4 869.7,718.2 872.6,728.3 870.7,730.1 874.1,740.2 871.5,742.0 875.5,752.1 872.3,753.9 876.7,764.0 876.7,764.0 858.7,764.0 858.7,764.0 863.1,753.9 859.9,752.1 863.8,742.0 861.2,740.2 864.6,730.1 862.7,728.3 865.6,718.2 864.5,716.4 867.4,706.3" fill="#211c17"/><polygon points="875.2,716.5 875.5,718.0 878.1,726.0 877.1,727.5 879.8,735.5 878.0,736.9 881.2,745.0 878.8,746.4 882.4,754.5 879.5,755.9 883.5,764.0 883.5,764.0 866.8,764.0 866.8,764.0 870.9,755.9 868.0,754.5 871.6,746.4 869.2,745.0 872.3,736.9 870.6,735.5 873.3,727.5 872.2,726.0 874.9,718.0" fill="#1c1814"/><polygon points="882.7,698.2 883.0,700.2 885.8,711.4 884.7,713.4 887.5,724.5 885.6,726.5 889.0,737.7 886.5,739.7 890.3,750.8 887.2,752.8 891.5,764.0 891.5,764.0 873.8,764.0 873.8,764.0 878.2,752.8 875.0,750.8 878.9,739.7 876.3,737.7 879.7,726.5 877.8,724.5 880.7,713.4 879.6,711.4 882.4,700.2" fill="#211c17"/><polygon points="889.8,705.8 890.1,707.6 892.6,717.5 891.6,719.2 894.2,729.1 892.5,730.8 895.5,740.7 893.2,742.5 896.7,752.4 893.9,754.1 897.7,764.0 897.7,764.0 881.9,764.0 881.9,764.0 885.7,754.1 882.9,752.4 886.4,742.5 884.1,740.7 887.1,730.8 885.4,729.1 888.0,719.2 887.0,717.5 889.5,707.6" fill="#211c17"/><polygon points="894.9,694.5 895.2,696.6 897.8,708.4 896.8,710.5 899.5,722.3 897.7,724.4 900.9,736.2 898.5,738.3 902.1,750.1 899.1,752.2 903.2,764.0 903.2,764.0 886.5,764.0 886.5,764.0 890.6,752.2 887.6,750.1 891.3,738.3 888.9,736.2 892.0,724.4 890.2,722.3 892.9,710.5 891.9,708.4 894.6,696.6" fill="#1c1814"/><polygon points="902.2,697.9 902.5,699.9 905.4,711.1 904.3,713.1 907.3,724.4 905.3,726.3 908.9,737.6 906.1,739.6 910.2,750.8 906.9,752.8 911.5,764.0 911.5,764.0 892.8,764.0 892.8,764.0 897.4,752.8 894.1,750.8 898.2,739.6 895.5,737.6 899.0,726.3 897.0,724.4 900.1,713.1 898.9,711.1 901.9,699.9" fill="#1c1814"/><polygon points="910.1,694.0 910.4,696.1 912.7,708.0 911.8,710.1 914.2,722.0 912.6,724.1 915.4,736.0 913.3,738.1 916.5,750.0 913.9,752.1 917.4,764.0 917.4,764.0 902.8,764.0 902.8,764.0 906.3,752.1 903.8,750.0 906.9,738.1 904.9,736.0 907.6,724.1 906.1,722.0 908.4,710.1 907.5,708.0 909.8,696.1" fill="#211c17"/><polygon points="917.1,712.0 917.4,713.6 920.5,722.4 919.3,724.0 922.5,732.8 920.4,734.4 924.2,743.2 921.3,744.8 925.6,753.6 922.1,755.2 927.0,764.0 927.0,764.0 907.2,764.0 907.2,764.0 912.1,755.2 908.5,753.6 912.9,744.8 910.0,743.2 913.8,734.4 911.6,732.8 914.9,724.0 913.6,722.4 916.8,713.6" fill="#211c17"/><polygon points="922.7,712.4 923.0,714.0 925.4,722.7 924.5,724.3 927.0,733.1 925.3,734.6 928.2,743.4 926.0,744.9 929.4,753.7 926.7,755.2 930.4,764.0 930.4,764.0 914.9,764.0 914.9,764.0 918.7,755.2 916.0,753.7 919.3,744.9 917.1,743.4 920.0,734.6 918.4,733.1 920.9,724.3 919.9,722.7 922.4,714.0" fill="#211c17"/><polygon points="927.7,703.3 928.0,705.1 930.9,715.4 929.8,717.2 932.7,727.6 930.8,729.4 934.3,739.7 931.6,741.5 935.6,751.9 932.4,753.7 936.8,764.0 936.8,764.0 918.6,764.0 918.6,764.0 923.1,753.7 919.8,751.9 923.8,741.5 921.1,739.7 924.6,729.4 922.7,727.6 925.6,717.2 924.5,715.4 927.4,705.1" fill="#1c1814"/><polygon points="933.4,711.2 933.7,712.8 936.4,721.8 935.3,723.4 938.1,732.3 936.3,733.9 939.6,742.9 937.1,744.5 940.8,753.4 937.8,755.0 942.0,764.0 942.0,764.0 924.8,764.0 924.8,764.0 929.0,755.0 925.9,753.4 929.7,744.5 927.2,742.9 930.5,733.9 928.6,732.3 931.4,723.4 930.4,721.8 933.1,712.8" fill="#211c17"/><polygon points="939.9,716.9 940.2,718.3 942.5,726.3 941.6,727.7 944.0,735.8 942.5,737.2 945.2,745.2 943.1,746.6 946.4,754.6 943.7,756.0 947.4,764.0 947.4,764.0 932.4,764.0 932.4,764.0 936.0,756.0 933.4,754.6 936.6,746.6 934.5,745.2 937.3,737.2 935.8,735.8 938.1,727.7 937.3,726.3 939.6,718.3" fill="#211c17"/><polygon points="947.6,693.3 947.9,695.4 951.0,707.4 949.8,709.5 953.0,721.6 950.9,723.7 954.6,735.7 951.8,737.8 956.1,749.9 952.6,752.0 957.4,764.0 957.4,764.0 937.8,764.0 937.8,764.0 942.6,752.0 939.1,749.9 943.4,737.8 940.6,735.7 944.3,723.7 942.2,721.6 945.4,709.5 944.2,707.4 947.3,695.4" fill="#211c17"/><polygon points="953.8,702.7 954.1,704.6 956.4,715.0 955.5,716.8 958.0,727.2 956.4,729.1 959.2,739.5 957.1,741.3 960.3,751.7 957.7,753.6 961.4,764.0 961.4,764.0 946.2,764.0 946.2,764.0 949.9,753.6 947.2,751.7 950.5,741.3 948.3,739.5 951.2,729.1 949.6,727.2 952.0,716.8 951.1,715.0 953.5,704.6" fill="#1c1814"/><polygon points="959.9,705.8 960.2,707.5 963.3,717.4 962.1,719.2 965.2,729.1 963.1,730.8 966.8,740.7 964.0,742.5 968.2,752.4 964.8,754.1 969.5,764.0 969.5,764.0 950.3,764.0 950.3,764.0 955.0,754.1 951.6,752.4 955.8,742.5 953.0,740.7 956.7,730.8 954.6,729.1 957.7,719.2 956.5,717.4 959.6,707.5" fill="#17130f"/><polygon points="966.3,707.9 966.6,709.6 969.0,719.1 968.1,720.8 970.5,730.4 968.9,732.0 971.8,741.6 969.6,743.3 972.9,752.8 970.2,754.5 973.9,764.0 973.9,764.0 958.7,764.0 958.7,764.0 962.4,754.5 959.7,752.8 963.0,743.3 960.8,741.6 963.7,732.0 962.1,730.4 964.5,720.8 963.6,719.1 966.0,709.6" fill="#211c17"/><polygon points="973.9,711.8 974.2,713.3 977.3,722.2 976.1,723.8 979.3,732.7 977.2,734.2 980.9,743.1 978.0,744.7 982.3,753.6 978.8,755.1 983.7,764.0 983.7,764.0 964.1,764.0 964.1,764.0 968.9,755.1 965.4,753.6 969.7,744.7 966.9,743.1 970.6,734.2 968.5,732.7 971.7,723.8 970.5,722.2 973.6,713.3" fill="#1c1814"/><polygon points="979.5,714.4 979.8,715.9 983.0,724.3 981.7,725.8 985.0,734.2 982.8,735.7 986.7,744.2 983.8,745.6 988.1,754.1 984.6,755.6 989.5,764.0 989.5,764.0 969.6,764.0 969.6,764.0 974.5,755.6 970.9,754.1 975.3,745.6 972.4,744.2 976.2,735.7 974.0,734.2 977.3,725.8 976.0,724.3 979.2,715.9" fill="#17130f"/><polygon points="986.1,711.6 986.4,713.1 988.9,722.0 988.0,723.6 990.5,732.5 988.9,734.1 991.9,743.0 989.6,744.6 993.0,753.5 990.2,755.1 994.1,764.0 994.1,764.0 978.2,764.0 978.2,764.0 982.1,755.1 979.3,753.5 982.7,744.6 980.4,743.0 983.4,734.1 981.7,732.5 984.3,723.6 983.3,722.0 985.8,713.1" fill="#211c17"/><polygon points="993.7,700.1 994.0,702.0 996.3,712.8 995.4,714.8 997.7,725.6 996.2,727.6 998.9,738.4 996.9,740.3 1000.0,751.2 997.5,753.1 1001.0,764.0 1001.0,764.0 986.5,764.0 986.5,764.0 990.0,753.1 987.4,751.2 990.5,740.3 988.5,738.4 991.2,727.6 989.7,725.6 992.0,714.8 991.2,712.8 993.4,702.0" fill="#17130f"/><polygon points="999.7,702.0 1000.0,703.8 1002.5,714.4 1001.5,716.2 1004.0,726.8 1002.4,728.6 1005.3,739.2 1003.1,741.0 1006.5,751.6 1003.8,753.5 1007.6,764.0 1007.6,764.0 991.9,764.0 991.9,764.0 995.7,753.5 993.0,751.6 996.3,741.0 994.1,739.2 997.1,728.6 995.4,726.8 997.9,716.2 997.0,714.4 999.4,703.8" fill="#1c1814"/><polygon points="1005.4,713.6 1005.7,715.1 1008.3,723.6 1007.3,725.2 1010.0,733.7 1008.2,735.2 1011.3,743.8 1009.0,745.3 1012.6,753.9 1009.6,755.4 1013.7,764.0 1013.7,764.0 997.1,764.0 997.1,764.0 1001.1,755.4 998.2,753.9 1001.8,745.3 999.4,743.8 1002.6,735.2 1000.8,733.7 1003.5,725.2 1002.5,723.6 1005.1,715.1" fill="#1c1814"/><polygon points="1010.9,699.7 1011.2,701.6 1014.2,712.6 1013.0,714.5 1016.1,725.4 1014.0,727.4 1017.6,738.3 1014.9,740.2 1019.0,751.1 1015.7,753.1 1020.3,764.0 1020.3,764.0 1001.5,764.0 1001.5,764.0 1006.2,753.1 1002.8,751.1 1006.9,740.2 1004.2,738.3 1007.8,727.4 1005.7,725.4 1008.8,714.5 1007.6,712.6 1010.6,701.6" fill="#1c1814"/><polygon points="1017.3,717.0 1017.6,718.4 1020.7,726.4 1019.5,727.8 1022.7,735.8 1020.6,737.2 1024.3,745.2 1021.4,746.6 1025.7,754.6 1022.2,756.0 1027.0,764.0 1027.0,764.0 1007.6,764.0 1007.6,764.0 1012.4,756.0 1008.9,754.6 1013.2,746.6 1010.4,745.2 1014.1,737.2 1012.0,735.8 1015.1,727.8 1013.9,726.4 1017.0,718.4" fill="#211c17"/><polygon points="1024.8,708.9 1025.1,710.6 1028.3,719.9 1027.0,721.6 1030.3,731.0 1028.1,732.6 1031.9,742.0 1029.0,743.6 1033.3,753.0 1029.8,754.6 1034.7,764.0 1034.7,764.0 1015.0,764.0 1015.0,764.0 1019.9,754.6 1016.3,753.0 1020.7,743.6 1017.8,742.0 1021.6,732.6 1019.4,731.0 1022.6,721.6 1021.4,719.9 1024.5,710.6" fill="#17130f"/><polygon points="1031.6,708.9 1031.9,710.6 1034.8,719.9 1033.7,721.6 1036.7,730.9 1034.7,732.6 1038.2,742.0 1035.5,743.6 1039.6,753.0 1036.3,754.6 1040.8,764.0 1040.8,764.0 1022.3,764.0 1022.3,764.0 1026.9,754.6 1023.6,753.0 1027.6,743.6 1024.9,742.0 1028.5,732.6 1026.5,730.9 1029.5,721.6 1028.3,719.9 1031.3,710.6" fill="#17130f"/><polygon points="1038.2,698.5 1038.5,700.5 1041.4,711.6 1040.2,713.6 1043.2,724.7 1041.2,726.7 1044.7,737.8 1042.1,739.8 1046.1,750.9 1042.8,752.9 1047.3,764.0 1047.3,764.0 1029.0,764.0 1029.0,764.0 1033.5,752.9 1030.2,750.9 1034.2,739.8 1031.6,737.8 1035.1,726.7 1033.1,724.7 1036.1,713.6 1034.9,711.6 1037.9,700.5" fill="#211c17"/><polygon points="1043.6,704.4 1043.9,706.2 1047.1,716.3 1045.8,718.1 1049.0,728.2 1046.9,730.0 1050.6,740.1 1047.8,741.9 1052.1,752.1 1048.6,753.9 1053.4,764.0 1053.4,764.0 1033.9,764.0 1033.9,764.0 1038.7,753.9 1035.2,752.1 1039.5,741.9 1036.7,740.1 1040.4,730.0 1038.3,728.2 1041.5,718.1 1040.2,716.3 1043.3,706.2" fill="#17130f"/><polygon points="1049.6,700.9 1049.9,702.8 1052.9,713.5 1051.7,715.4 1054.8,726.1 1052.8,728.0 1056.4,738.8 1053.6,740.7 1057.8,751.4 1054.4,753.3 1059.1,764.0 1059.1,764.0 1040.0,764.0 1040.0,764.0 1044.7,753.3 1041.3,751.4 1045.5,740.7 1042.7,738.8 1046.4,728.0 1044.3,726.1 1047.4,715.4 1046.2,713.5 1049.3,702.8" fill="#211c17"/><polygon points="1055.2,713.1 1055.5,714.6 1058.7,723.3 1057.4,724.8 1060.7,733.5 1058.5,735.0 1062.3,743.6 1059.4,745.2 1063.8,753.8 1060.2,755.4 1065.1,764.0 1065.1,764.0 1045.3,764.0 1045.3,764.0 1050.2,755.4 1046.6,753.8 1051.0,745.2 1048.1,743.6 1051.9,735.0 1049.7,733.5 1053.0,724.8 1051.7,723.3 1054.9,714.6" fill="#211c17"/><polygon points="1061.0,703.9 1061.3,705.7 1063.9,716.0 1062.9,717.8 1065.6,728.0 1063.8,729.8 1066.9,740.0 1064.6,741.8 1068.1,752.0 1065.2,753.8 1069.3,764.0 1069.3,764.0 1052.8,764.0 1052.8,764.0 1056.8,753.8 1053.9,752.0 1057.5,741.8 1055.1,740.0 1058.2,729.8 1056.5,728.0 1059.1,717.8 1058.1,716.0 1060.7,705.7" fill="#1c1814"/><polygon points="1067.5,706.7 1067.8,708.5 1070.0,718.2 1069.2,719.9 1071.4,729.6 1070.0,731.4 1072.6,741.1 1070.6,742.8 1073.7,752.5 1071.2,754.3 1074.6,764.0 1074.6,764.0 1060.5,764.0 1060.5,764.0 1063.9,754.3 1061.4,752.5 1064.4,742.8 1062.5,741.1 1065.1,731.4 1063.6,729.6 1065.9,719.9 1065.0,718.2 1067.2,708.5" fill="#1c1814"/><polygon points="1074.1,701.4 1074.4,703.3 1077.4,713.9 1076.2,715.8 1079.3,726.4 1077.2,728.3 1080.8,739.0 1078.1,740.8 1082.2,751.5 1078.9,753.4 1083.5,764.0 1083.5,764.0 1064.7,764.0 1064.7,764.0 1069.3,753.4 1065.9,751.5 1070.1,740.8 1067.3,739.0 1070.9,728.3 1068.9,726.4 1072.0,715.8 1070.8,713.9 1073.8,703.3" fill="#211c17"/><polygon points="1079.4,693.4 1079.7,695.5 1082.1,707.5 1081.2,709.7 1083.6,721.7 1082.0,723.8 1084.8,735.8 1082.7,737.9 1085.9,749.9 1083.3,752.0 1086.9,764.0 1086.9,764.0 1071.9,764.0 1071.9,764.0 1075.6,752.0 1073.0,749.9 1076.2,737.9 1074.1,735.8 1076.9,723.8 1075.3,721.7 1077.7,709.7 1076.8,707.5 1079.1,695.5" fill="#211c17"/><polygon points="1085.8,714.9 1086.1,716.4 1089.1,724.8 1087.9,726.2 1091.0,734.6 1089.0,736.0 1092.6,744.4 1089.8,745.8 1094.0,754.2 1090.6,755.7 1095.2,764.0 1095.2,764.0 1076.4,764.0 1076.4,764.0 1081.1,755.7 1077.7,754.2 1081.8,745.8 1079.1,744.4 1082.7,736.0 1080.6,734.6 1083.7,726.2 1082.5,724.8 1085.5,716.4" fill="#17130f"/><polygon points="1091.6,703.3 1091.9,705.1 1094.2,715.4 1093.4,717.3 1095.7,727.6 1094.2,729.4 1096.9,739.7 1094.8,741.5 1098.0,751.9 1095.4,753.7 1099.0,764.0 1099.0,764.0 1084.3,764.0 1084.3,764.0 1087.8,753.7 1085.2,751.9 1088.4,741.5 1086.3,739.7 1089.1,729.4 1087.6,727.6 1089.9,717.3 1089.0,715.4 1091.3,705.1" fill="#17130f"/><polygon points="1099.3,715.3 1099.6,716.8 1102.8,725.1 1101.5,726.5 1104.7,734.8 1102.6,736.3 1106.3,744.5 1103.5,746.0 1107.8,754.3 1104.3,755.7 1109.1,764.0 1109.1,764.0 1089.6,764.0 1089.6,764.0 1094.4,755.7 1090.9,754.3 1095.2,746.0 1092.3,744.5 1096.1,736.3 1094.0,734.8 1097.2,726.5 1095.9,725.1 1099.0,716.8" fill="#211c17"/>
<rect x="451" y="793" width="644" height="67" fill="url(#rf)"/>
<g filter="url(#b1)"><rect x="956.5" y="840.5" width="3.7" height="13.0" fill="#c4ac78" opacity="0.36"/><rect x="1018.8" y="815.7" width="4.3" height="13.3" fill="#9a8a60" opacity="0.27"/><rect x="1078.3" y="841.9" width="4.3" height="8.4" fill="#a08c6c" opacity="0.40"/><rect x="997.7" y="830.7" width="7.9" height="15.1" fill="#c4ac78" opacity="0.39"/><rect x="865.1" y="813.6" width="6.1" height="12.8" fill="#9a8a60" opacity="0.55"/><rect x="843.3" y="837.1" width="5.8" height="11.5" fill="#b8a070" opacity="0.42"/><rect x="952.4" y="849.7" width="4.8" height="9.0" fill="#a08c6c" opacity="0.52"/><rect x="891.9" y="814.2" width="5.7" height="12.1" fill="#8a775c" opacity="0.31"/><rect x="884.4" y="812.7" width="8.0" height="9.7" fill="#b8a070" opacity="0.38"/><rect x="1086.0" y="838.1" width="4.5" height="14.6" fill="#6a5a44" opacity="0.59"/><rect x="863.3" y="821.5" width="3.9" height="14.9" fill="#6a5a44" opacity="0.35"/><rect x="901.0" y="811.1" width="5.4" height="8.7" fill="#b8a070" opacity="0.53"/><rect x="1084.0" y="812.0" width="4.9" height="14.2" fill="#9a8a60" opacity="0.55"/><rect x="995.5" y="830.0" width="6.7" height="11.3" fill="#6a5a44" opacity="0.50"/><rect x="990.1" y="834.4" width="4.5" height="10.3" fill="#b8a070" opacity="0.48"/><rect x="977.8" y="827.1" width="6.4" height="9.5" fill="#a08c6c" opacity="0.58"/><rect x="968.0" y="831.0" width="4.7" height="8.3" fill="#9a8a60" opacity="0.29"/><rect x="1083.2" y="835.2" width="3.4" height="15.0" fill="#8a775c" opacity="0.58"/><rect x="1088.7" y="814.0" width="4.8" height="9.5" fill="#a08c6c" opacity="0.27"/><rect x="1010.6" y="808.1" width="3.1" height="11.7" fill="#6a5a44" opacity="0.59"/><rect x="1092.3" y="847.3" width="5.7" height="10.4" fill="#6a5a44" opacity="0.31"/><rect x="973.6" y="821.3" width="5.5" height="8.0" fill="#6a5a44" opacity="0.29"/><rect x="871.0" y="813.9" width="6.5" height="6.3" fill="#9a8a60" opacity="0.28"/><rect x="1072.3" y="816.8" width="4.1" height="8.7" fill="#a08c6c" opacity="0.59"/><rect x="1085.7" y="847.6" width="7.3" height="15.3" fill="#8a775c" opacity="0.46"/><rect x="1044.8" y="850.8" width="5.9" height="15.0" fill="#b8a070" opacity="0.58"/><rect x="856.9" y="828.9" width="7.8" height="6.3" fill="#8a775c" opacity="0.35"/><rect x="913.7" y="850.4" width="5.1" height="7.5" fill="#a08c6c" opacity="0.49"/><rect x="971.7" y="831.7" width="6.8" height="14.1" fill="#8a775c" opacity="0.38"/><rect x="1087.9" y="814.9" width="5.0" height="8.3" fill="#b8a070" opacity="0.37"/><rect x="925.9" y="805.7" width="6.9" height="8.6" fill="#9a8a60" opacity="0.38"/><rect x="1025.6" y="829.0" width="4.8" height="12.5" fill="#c4ac78" opacity="0.31"/><rect x="873.7" y="816.7" width="5.4" height="13.8" fill="#b8a070" opacity="0.31"/><rect x="1013.7" y="833.1" width="6.0" height="11.7" fill="#9a8a60" opacity="0.56"/><rect x="882.9" y="815.7" width="4.5" height="9.3" fill="#6a5a44" opacity="0.32"/><rect x="843.1" y="816.4" width="3.5" height="12.8" fill="#9a8a60" opacity="0.34"/><rect x="891.7" y="824.1" width="7.9" height="9.7" fill="#b8a070" opacity="0.27"/><rect x="853.4" y="843.4" width="8.0" height="10.2" fill="#6a5a44" opacity="0.52"/><rect x="923.6" y="841.4" width="4.9" height="8.9" fill="#9a8a60" opacity="0.58"/><rect x="852.1" y="849.8" width="7.6" height="6.5" fill="#8a775c" opacity="0.38"/><rect x="851.3" y="847.1" width="3.7" height="8.1" fill="#c4ac78" opacity="0.59"/><rect x="1080.8" y="820.7" width="7.7" height="7.4" fill="#6a5a44" opacity="0.36"/><rect x="845.3" y="815.9" width="6.5" height="8.4" fill="#6a5a44" opacity="0.56"/><rect x="1011.1" y="821.9" width="6.6" height="15.2" fill="#a08c6c" opacity="0.58"/><rect x="853.0" y="813.5" width="4.7" height="6.5" fill="#b8a070" opacity="0.36"/><rect x="988.4" y="817.6" width="5.6" height="14.2" fill="#c4ac78" opacity="0.52"/><rect x="973.6" y="848.6" width="3.4" height="8.2" fill="#8a775c" opacity="0.57"/><rect x="1092.5" y="848.0" width="6.4" height="7.9" fill="#b8a070" opacity="0.47"/><rect x="861.8" y="827.2" width="7.5" height="12.0" fill="#b8a070" opacity="0.46"/><rect x="1058.2" y="826.4" width="4.0" height="15.4" fill="#6a5a44" opacity="0.26"/><rect x="1036.1" y="823.4" width="3.3" height="7.6" fill="#a08c6c" opacity="0.39"/><rect x="1052.0" y="849.2" width="3.1" height="10.2" fill="#c4ac78" opacity="0.46"/><rect x="850.7" y="806.1" width="4.7" height="7.7" fill="#8a775c" opacity="0.37"/><rect x="1058.7" y="830.8" width="6.4" height="8.5" fill="#6a5a44" opacity="0.36"/><rect x="928.5" y="845.7" width="5.9" height="10.2" fill="#9a8a60" opacity="0.46"/><rect x="901.9" y="848.7" width="5.5" height="12.8" fill="#9a8a60" opacity="0.55"/><rect x="1067.7" y="812.5" width="5.5" height="15.8" fill="#b8a070" opacity="0.52"/><rect x="1081.5" y="819.4" width="5.8" height="10.0" fill="#6a5a44" opacity="0.58"/><rect x="909.3" y="809.5" width="6.4" height="9.5" fill="#9a8a60" opacity="0.29"/><rect x="1031.5" y="841.8" width="6.3" height="12.9" fill="#6a5a44" opacity="0.42"/><rect x="905.3" y="831.4" width="6.2" height="10.6" fill="#8a775c" opacity="0.36"/><rect x="1003.4" y="807.8" width="3.7" height="6.3" fill="#9a8a60" opacity="0.40"/><rect x="856.4" y="841.8" width="4.2" height="14.3" fill="#8a775c" opacity="0.34"/><rect x="1073.2" y="828.2" width="5.1" height="11.6" fill="#8a775c" opacity="0.42"/><rect x="961.8" y="818.4" width="7.2" height="11.0" fill="#b8a070" opacity="0.57"/><rect x="1005.4" y="836.7" width="5.2" height="9.0" fill="#6a5a44" opacity="0.57"/><rect x="1015.6" y="841.7" width="6.6" height="14.1" fill="#a08c6c" opacity="0.29"/><rect x="960.1" y="837.9" width="3.2" height="14.1" fill="#9a8a60" opacity="0.48"/><rect x="958.8" y="834.6" width="6.4" height="10.0" fill="#6a5a44" opacity="0.55"/><rect x="1092.7" y="812.3" width="4.3" height="8.9" fill="#c4ac78" opacity="0.36"/><rect x="883.3" y="836.9" width="6.8" height="15.9" fill="#9a8a60" opacity="0.48"/><rect x="1032.5" y="835.8" width="5.2" height="10.1" fill="#c4ac78" opacity="0.52"/><rect x="1065.5" y="831.2" width="7.7" height="12.4" fill="#c4ac78" opacity="0.33"/><rect x="1022.4" y="806.8" width="7.4" height="11.0" fill="#a08c6c" opacity="0.33"/><rect x="997.9" y="810.4" width="3.8" height="10.3" fill="#c4ac78" opacity="0.35"/><rect x="883.6" y="834.8" width="6.4" height="15.4" fill="#b8a070" opacity="0.36"/><rect x="848.4" y="806.2" width="5.7" height="11.8" fill="#b8a070" opacity="0.59"/><rect x="1039.1" y="820.3" width="4.4" height="11.2" fill="#c4ac78" opacity="0.27"/><rect x="859.6" y="837.4" width="3.3" height="13.6" fill="#9a8a60" opacity="0.34"/><rect x="886.8" y="831.7" width="4.2" height="9.3" fill="#8a775c" opacity="0.37"/><rect x="1088.1" y="818.6" width="7.3" height="14.6" fill="#9a8a60" opacity="0.40"/><rect x="941.8" y="815.8" width="5.4" height="15.6" fill="#8a775c" opacity="0.40"/><rect x="960.1" y="824.1" width="6.1" height="14.1" fill="#9a8a60" opacity="0.57"/><rect x="900.6" y="829.9" width="8.0" height="11.3" fill="#a08c6c" opacity="0.31"/><rect x="1095.6" y="833.3" width="3.9" height="15.7" fill="#6a5a44" opacity="0.45"/><rect x="1081.7" y="817.3" width="7.0" height="6.4" fill="#8a775c" opacity="0.41"/><rect x="948.6" y="809.9" width="5.4" height="15.5" fill="#8a775c" opacity="0.44"/><rect x="834.6" y="826.4" width="6.1" height="14.7" fill="#c4ac78" opacity="0.42"/><rect x="1041.9" y="816.3" width="7.1" height="8.4" fill="#9a8a60" opacity="0.39"/><rect x="857.0" y="830.9" width="4.2" height="11.7" fill="#c4ac78" opacity="0.26"/><rect x="853.3" y="823.0" width="5.3" height="7.1" fill="#a08c6c" opacity="0.55"/><rect x="963.0" y="832.0" width="4.6" height="15.8" fill="#8a775c" opacity="0.37"/><rect x="839.8" y="843.4" width="6.6" height="11.8" fill="#6a5a44" opacity="0.39"/><rect x="1069.1" y="816.8" width="7.0" height="13.1" fill="#c4ac78" opacity="0.32"/><rect x="1009.6" y="814.4" width="5.2" height="8.1" fill="#8a775c" opacity="0.39"/><rect x="914.5" y="840.5" width="5.3" height="10.7" fill="#9a8a60" opacity="0.41"/><rect x="933.6" y="846.3" width="7.9" height="13.9" fill="#c4ac78" opacity="0.56"/><rect x="853.9" y="815.4" width="4.1" height="12.0" fill="#9a8a60" opacity="0.48"/><rect x="1011.2" y="825.0" width="6.3" height="8.3" fill="#8a775c" opacity="0.44"/><rect x="1093.7" y="820.7" width="6.6" height="6.2" fill="#c4ac78" opacity="0.37"/><rect x="947.1" y="809.2" width="4.9" height="14.6" fill="#b8a070" opacity="0.60"/><rect x="886.1" y="847.0" width="3.3" height="11.8" fill="#a08c6c" opacity="0.54"/><rect x="937.7" y="832.2" width="6.6" height="13.6" fill="#6a5a44" opacity="0.38"/><rect x="960.7" y="816.8" width="6.4" height="10.1" fill="#a08c6c" opacity="0.60"/><rect x="870.2" y="840.9" width="4.6" height="13.3" fill="#8a775c" opacity="0.35"/><rect x="984.3" y="829.3" width="5.5" height="7.7" fill="#6a5a44" opacity="0.53"/><rect x="965.0" y="827.4" width="7.5" height="15.7" fill="#6a5a44" opacity="0.30"/><rect x="994.5" y="826.2" width="5.6" height="15.9" fill="#9a8a60" opacity="0.26"/><rect x="910.9" y="824.9" width="3.3" height="6.1" fill="#9a8a60" opacity="0.49"/><rect x="1016.9" y="843.1" width="4.9" height="8.7" fill="#b8a070" opacity="0.45"/><rect x="970.1" y="829.8" width="5.0" height="10.0" fill="#b8a070" opacity="0.47"/><rect x="1055.1" y="833.1" width="4.0" height="6.3" fill="#8a775c" opacity="0.47"/><rect x="841.1" y="813.8" width="3.1" height="6.6" fill="#9a8a60" opacity="0.26"/><rect x="1051.0" y="844.5" width="4.1" height="13.0" fill="#6a5a44" opacity="0.36"/><rect x="1049.1" y="846.6" width="7.2" height="13.0" fill="#8a775c" opacity="0.40"/><rect x="1049.3" y="831.2" width="6.0" height="15.9" fill="#a08c6c" opacity="0.44"/><rect x="993.5" y="819.7" width="6.2" height="15.2" fill="#c4ac78" opacity="0.56"/><rect x="880.5" y="813.4" width="6.0" height="13.6" fill="#c4ac78" opacity="0.37"/><rect x="1021.2" y="814.9" width="7.4" height="14.7" fill="#a08c6c" opacity="0.42"/><rect x="849.7" y="827.7" width="6.3" height="14.5" fill="#6a5a44" opacity="0.27"/><rect x="1056.9" y="830.0" width="5.9" height="7.0" fill="#8a775c" opacity="0.46"/><rect x="1035.8" y="827.6" width="5.7" height="9.9" fill="#8a775c" opacity="0.40"/><rect x="1074.9" y="833.3" width="5.8" height="6.4" fill="#a08c6c" opacity="0.49"/><rect x="919.4" y="826.5" width="4.4" height="11.6" fill="#b8a070" opacity="0.34"/><rect x="834.9" y="847.5" width="4.5" height="6.1" fill="#b8a070" opacity="0.36"/><rect x="990.9" y="817.4" width="3.6" height="14.5" fill="#c4ac78" opacity="0.49"/><rect x="884.3" y="830.1" width="7.4" height="14.7" fill="#6a5a44" opacity="0.41"/><rect x="1024.3" y="816.2" width="7.1" height="9.6" fill="#b8a070" opacity="0.41"/><rect x="974.2" y="829.5" width="6.9" height="14.9" fill="#a08c6c" opacity="0.35"/><rect x="912.5" y="823.0" width="6.2" height="6.4" fill="#c4ac78" opacity="0.35"/><rect x="884.7" y="845.0" width="7.2" height="12.8" fill="#6a5a44" opacity="0.38"/><rect x="1084.2" y="809.2" width="5.5" height="8.3" fill="#9a8a60" opacity="0.60"/><rect x="1077.0" y="843.4" width="3.4" height="8.5" fill="#b8a070" opacity="0.44"/><rect x="970.4" y="819.3" width="7.3" height="11.2" fill="#8a775c" opacity="0.44"/><rect x="863.9" y="844.9" width="7.0" height="13.1" fill="#8a775c" opacity="0.41"/><rect x="1096.3" y="846.2" width="6.0" height="11.5" fill="#8a775c" opacity="0.45"/><rect x="879.9" y="826.3" width="7.5" height="12.7" fill="#a08c6c" opacity="0.58"/><rect x="1006.9" y="842.4" width="7.9" height="15.2" fill="#9a8a60" opacity="0.26"/><rect x="892.3" y="835.2" width="4.1" height="6.7" fill="#b8a070" opacity="0.37"/><rect x="1087.8" y="830.7" width="3.5" height="12.4" fill="#b8a070" opacity="0.32"/><rect x="1045.1" y="815.3" width="3.8" height="9.4" fill="#6a5a44" opacity="0.53"/><rect x="871.2" y="814.3" width="3.1" height="7.6" fill="#c4ac78" opacity="0.48"/><rect x="1094.9" y="842.0" width="7.5" height="13.4" fill="#b8a070" opacity="0.47"/><rect x="997.0" y="848.0" width="3.2" height="11.6" fill="#c4ac78" opacity="0.56"/><rect x="1008.0" y="822.8" width="6.2" height="10.2" fill="#6a5a44" opacity="0.59"/><rect x="897.6" y="817.8" width="7.6" height="12.7" fill="#8a775c" opacity="0.34"/><rect x="1018.2" y="822.5" width="7.7" height="12.7" fill="#8a775c" opacity="0.59"/><rect x="1011.5" y="833.9" width="4.9" height="13.2" fill="#c4ac78" opacity="0.25"/><rect x="942.7" y="832.1" width="3.6" height="8.5" fill="#8a775c" opacity="0.26"/><rect x="1094.5" y="822.1" width="4.7" height="7.5" fill="#9a8a60" opacity="0.48"/></g>
<rect x="451" y="858" width="644" height="108.5" fill="url(#wt)"/>
<polygon points="794.0,443.0 842.0,557.0 922.0,747.0 871.6,747.0 794.0,559.0" fill="#fff"/>
</g>
</svg></div>
  <div id="status">
    <div class="abs" style="left:0;top:0;width:105px;height:28px;background:#464646;border-right:1px solid #3e3e3e"></div>
    <svg class="abs" style="left:110px;top:4px" width="24" height="19" viewBox="0 0 24 19"><path d="M7 4 h-5 v13 h15 v-4" fill="none" stroke="#d4d4d4" stroke-width="2"/><path d="M7.500 13 c0 -6 4 -8 8 -8 v-4 l7.500 6.500 l-7.500 6.500 v-4 c-3 0 -6 0 -8 3z" fill="#d4d4d4"/></svg>
    <div class="lbl" style="left:36px;top:2px;-webkit-text-stroke:.2px #f2f2f2">25%</div>
    <div class="lbl" style="left:189px;top:2px">Dok: 46,6 MB/54,0 MB</div>
  </div>

  <div id="dockgap"></div>
  <div class="abs" style="left:1641px;top:98px;width:5px;height:1238px;background:#333"></div>
  <div id="dock">
    <div class="abs" style="left:0;top:0;width:564px;height:20px;background:#373737;border-bottom:1.5px solid #2a2a2a"></div>
    <svg class="abs" style="left:47px;top:4px" width="14" height="12" viewBox="0 0 14 12"><path d="M6 1 l-5 5 l5 5z M13 1 l-5 5 l5 5z" fill="#e6e6e6"/></svg>
    <svg class="abs" style="left:543px;top:4px" width="14" height="12" viewBox="0 0 14 12"><path d="M1 1 l5 5 l-5 5z M8 1 l5 5 l-5 5z" fill="#e6e6e6"/></svg>
    <div class="abs" style="left:0;top:21px;width:67px;height:1218px;background:#535353;border-left:1.5px solid #2f2f2f;border-right:1.5px solid #2f2f2f"></div>
    <div class="abs" style="left:67px;top:21px;width:4px;height:1218px;background:#3c3c3c"></div>
    <div class="abs" style="left:1.5px;top:90px;width:64px;height:2.5px;background:#303030"></div>
    <div class="grip" style="left:17px;top:27px;width:34px;height:7px"></div>
    <div class="abs" style="left:1.5px;top:160.5px;width:64px;height:2.5px;background:#303030"></div>
    <div class="grip" style="left:17px;top:98.5px;width:34px;height:7px"></div>
    <div class="abs" style="left:1.5px;top:232px;width:64px;height:2.5px;background:#303030"></div>
    <div class="grip" style="left:17px;top:169px;width:34px;height:7px"></div>
    <svg class="abs" style="left:19px;top:45px" width="34" height="34" viewBox="0 0 34 34"><rect x="5" y="3" width="7.500" height="7.500" fill="none" stroke="#d6d6d6" stroke-width="1.600"/><rect x="5" y="13.500" width="7.500" height="7.500" fill="none" stroke="#d6d6d6" stroke-width="1.600"/><rect x="4.200" y="23.500" width="9" height="8.500" fill="#b5b5b5"/><path d="M17 5.500 l8 -3.500 v2.500 c7 6 6 18 -5 22.500 c6 -6 7 -13 1 -19 l-1 2.500z" fill="#d6d6d6"/></svg>
    <svg class="abs" style="left:19px;top:115px" width="34" height="34" viewBox="0 0 34 34"><path d="M10 3 l7 3.5 v8.5 l-7 4 l-7 -4 v-8.5z M3 6.5 l7 4 l7 -4 M10 10.5 v8.5" fill="#777" stroke="#d6d6d6" stroke-width="1.5"/><rect x="21" y="3" width="7" height="6" fill="#cfcfcf"/><rect x="21" y="12" width="7" height="6" fill="#cfcfcf"/><rect x="3" y="24" width="26" height="6" fill="#cfcfcf"/><path d="M22 25.5 h6 l-3 3.5z" fill="#333"/></svg>
    <svg class="abs" style="left:17px;top:186px" width="38" height="38" viewBox="0 0 38 38"><path d="M3 3 h12 l18 24 v7 h-12 l-18 -24z" fill="none" stroke="#e0e0e0" stroke-width="2" stroke-linejoin="round"/><path d="M5 10 v10 h6 M15 4 v12 M24 16 h10 v17 M24 17 v11 M25 19 l7 9" fill="none" stroke="#e0e0e0" stroke-width="1.8"/></svg>
    <div class="phead" style="left:71px;top:21px;width:493px;height:29px;border-bottom:1.5px solid #2c2c2c"><div class="ptab act" style="left:0;width:72px;padding:6px 0 0 12px;height:31px">Farbe</div><div class="ptab" style="left:72px;width:116px;padding:6px 0 0 13px">Farbfelder</div></div>
    <svg class="abs" style="left:531px;top:28px" width="28" height="16" viewBox="0 0 28 16"><path d="M1 5 h8 l-4 4.5z" fill="#d8d8d8"/><path d="M11 2 h15 M11 6 h15 M11 10 h15 M11 14 h15" stroke="#d8d8d8" stroke-width="1.7"/></svg>
    <div class="abs" style="left:104.5px;top:86.5px;width:33px;height:32.5px;background:#e5272e;border:2px solid #f4f4f4"></div>
    <div class="abs" style="left:85px;top:66.5px;width:37px;height:37px;background:#fff;border:2px solid #3a3a3a;box-shadow:0 0 0 1.5px #777"></div>
    <div class="abs" style="left:148px;top:62px;width:326.5px;height:293px;background:linear-gradient(to bottom,rgba(0,0,0,0),#000),linear-gradient(to right,#fff,#f4000e);box-shadow:0 0 0 1.5px #3c3c3c"></div>
    <div class="abs" style="left:148px;top:62px;width:327px;height:293px;overflow:hidden"><div class="abs" style="left:-11.5px;top:-11.5px;width:23px;height:23px;border-radius:50%;background:#fff;border:2px solid #111"></div></div>
    <div class="abs" style="left:502.5px;top:62px;width:34.5px;height:293px;background:linear-gradient(to bottom,#ff0030 0%,#ff00ff 17%,#0000ff 33%,#00ffff 50%,#00ff00 67%,#ffff00 83%,#ff0000 100%);box-shadow:0 0 0 1.5px #3c3c3c"></div>
    <svg class="abs" style="left:485.5px;top:347.5px" width="14" height="16" viewBox="0 0 14 16"><path d="M3.500 3.500 v9 l7 -4.500z" fill="#e4e4e4" stroke="#e4e4e4" stroke-width="4" stroke-linejoin="round"/></svg>
    <div class="abs" style="left:545px;top:347px;width:16px;height:16px;background:radial-gradient(circle,#353535 .9px,transparent 1.2px) 0 0/3.2px 3.2px;clip-path:polygon(100% 0,100% 100%,0 100%)"></div>
    <div class="abs" style="left:71px;top:365px;width:493px;height:6px;background:#3a3a3a;border-top:1.5px solid #2b2b2b"></div>
    <div class="phead" style="left:71px;top:371px;width:493px;height:28px;border-bottom:1.5px solid #2c2c2c"><div class="ptab act" style="left:0;width:87px;padding:5px 0 0 12px;height:30px">Ebenen</div><div class="ptab" style="left:87px;width:84px;padding:5px 0 0 12px">Kanäle</div><div class="ptab" style="left:171px;width:74px;padding:5px 0 0 13px">Pfade</div></div>
    <svg class="abs" style="left:531px;top:377px" width="28" height="16" viewBox="0 0 28 16"><path d="M1 5 h8 l-4 4.5z" fill="#d8d8d8"/><path d="M11 2 h15 M11 6 h15 M11 10 h15 M11 14 h15" stroke="#d8d8d8" stroke-width="1.7"/></svg>
    <div class="dd" style="left:78.5px;top:409.5px;width:163px;height:29px"></div>
    <svg class="abs" style="left:90px;top:414px" width="22" height="22" viewBox="0 0 22 22"><circle cx="12" cy="9" r="6" fill="none" stroke="#e8e8e8" stroke-width="2"/><path d="M7.5 13.5 L2 19" stroke="#e8e8e8" stroke-width="2.6" stroke-linecap="round"/></svg>
    <div class="lbl" style="left:114px;top:413px">Art</div>
    <svg class="abs" style="left:223px;top:416px" width="10" height="16" viewBox="0 0 10 16"><path d="M1 6 l4 -5 l4 5z M1 10 l4 5 l4 -5z" fill="#ececec"/></svg>
    <svg class="abs" style="left:295px;top:412px" width="24" height="22" viewBox="0 0 24 22"><rect x="2" y="2" width="20" height="17" fill="none" stroke="#d6d6d6" stroke-width="1.8"/><path d="M4.5 16.5 l5 -6 l3.5 3.5 l2 -2 l4.5 4.5z" fill="#d6d6d6"/><circle cx="16" cy="7" r="1.8" fill="#d6d6d6"/></svg>
    <svg class="abs" style="left:338px;top:413px" width="22" height="22" viewBox="0 0 22 22"><circle cx="11" cy="10.5" r="8" fill="none" stroke="#d6d6d6" stroke-width="2"/><path d="M5.3 16.2 A8 8 0 0 1 16.7 4.8z" fill="#d6d6d6"/></svg>
    <div class="abs" style="left:380px;top:408px;font-family:'Liberation Serif',serif;font-weight:bold;font-size:27px;color:#d6d6d6">T</div>
    <svg class="abs" style="left:419px;top:412px" width="24" height="24" viewBox="0 0 24 24"><rect x="4" y="4" width="15.5" height="15.5" fill="none" stroke="#d6d6d6" stroke-width="1.8"/><g fill="#d6d6d6"><rect x="1.5" y="1.5" width="5" height="5"/><rect x="17" y="1.5" width="5" height="5"/><rect x="1.5" y="17" width="5" height="5"/><rect x="17" y="17" width="5" height="5"/></g></svg>
    <svg class="abs" style="left:461px;top:411px" width="24" height="24" viewBox="0 0 24 24"><path d="M7 2 h8 l5 5 v13 h-7" fill="none" stroke="#d6d6d6" stroke-width="1.8"/><path d="M15 2 v5 h5" fill="none" stroke="#d6d6d6" stroke-width="1.5"/><rect x="2" y="12" width="10" height="10" fill="#d6d6d6"/></svg>
    <div class="abs" style="left:541px;top:409.5px;width:16px;height:28.5px;background:#333;border:1.5px solid #2a2a2a;border-radius:2px"><div style="width:13px;height:12px;background:linear-gradient(#9a9a9a,#6a6a6a)"></div></div>
    <div class="abs" style="left:71px;top:447px;width:493px;height:1.5px;background:#3a3a3a;box-shadow:0 1px 0 #5e5e5e"></div>
    <div class="dd" style="left:78.5px;top:458.5px;width:279px;height:28.5px"></div>
    <div class="lbl" style="left:90px;top:462px">Normal</div>
    <svg class="abs" style="left:339px;top:465px" width="10" height="16" viewBox="0 0 10 16"><path d="M1 6 l4 -5 l4 5z M1 10 l4 5 l4 -5z" fill="#ececec"/></svg>
    <div class="lbl" style="left:366.5px;top:462px">Deckkraft:</div>
    <div class="num" style="left:458px;top:458.5px;width:67px;height:28.5px;padding:3px 0 0 8px">100%</div>
    <div class="numbtn" style="left:525px;top:458.5px;width:31px;height:28.5px"><div class="dn" style="left:9px;top:11px"></div></div>
    <div class="abs" style="left:71px;top:496.5px;width:493px;height:1.5px;background:#3a3a3a;box-shadow:0 1px 0 #5e5e5e"></div>
    <div class="lbl" style="left:79.5px;top:511px">Fixieren:</div>
    <div class="abs" style="left:161px;top:512px;width:19px;height:19px;background:conic-gradient(#8a8a8a 25%,#6b6b6b 0 50%,#8a8a8a 0 75%,#6b6b6b 0);background-size:9.5px 9.5px;border:1px solid #666"></div>
    <svg class="abs" style="left:195px;top:507px" width="30" height="26" viewBox="0 0 30 26"><path d="M27 2 L14 16" stroke="#8d8d8d" stroke-width="3" stroke-linecap="round"/><path d="M12 14.5 l4.5 3.5 c-2 5 -8 6.5 -14 5 c4 -1.5 4.5 -7 9.5 -8.500z" fill="#8d8d8d"/></svg>
    <svg class="abs" style="left:234px;top:509px" width="25" height="25" viewBox="0 0 25 25"><path d="M12.500 3 v19 M3 12.500 h19" stroke="#d6d6d6" stroke-width="1.8"/><path d="M12.500 0.500 l-4 5 h8z M12.500 24.500 l-4 -5 h8z M0.500 12.500 l5 -4 v8z M24.500 12.500 l-5 -4 v8z" fill="#d6d6d6"/></svg>
    <svg class="abs" style="left:275px;top:509px" width="19" height="23" viewBox="0 0 19 23"><path d="M5 10 v-3.500 a4.500 4.500 0 0 1 9 0 v3.500" fill="none" stroke="#d6d6d6" stroke-width="2.2"/><rect x="2" y="9.500" width="15" height="11.500" rx="1.500" fill="#d6d6d6"/><rect x="8" y="13" width="3" height="4.500" fill="#444"/></svg>
    <div class="lbl" style="left:392.5px;top:510px">Fläche:</div>
    <div class="num" style="left:458px;top:506.5px;width:67px;height:28.5px;padding:3px 0 0 8px">100%</div>
    <div class="numbtn" style="left:525px;top:506.5px;width:31px;height:28.5px"><div class="dn" style="left:9px;top:11px"></div></div>
    <div class="abs" style="left:71px;top:546px;width:467px;height:659.5px;background:#484848;border-top:2px solid #3a3a3a"></div>
    <div class="abs" style="left:538px;top:546px;width:26px;height:659.5px;background:#444;border-top:2px solid #3a3a3a;border-left:1.5px solid #3e3e3e"></div>
    <div class="abs" style="left:71px;top:548.5px;width:52.500px;height:67.500px;background:#535353;border-bottom:1.500px solid #3a3a3a;border-right:1.500px solid #3a3a3a"><svg class="abs" style="left:14.5px;top:24px" width="22.5" height="17.3" viewBox="0 0 26 20"><path d="M1.500 10 c5 -9 18 -9 23 0 c-5 8 -18 8 -23 0z" fill="#d0d0d0"/><path d="M1.500 10 c5 -9 18 -9 23 0" fill="none" stroke="#e6e6e6" stroke-width="1.600"/><circle cx="13" cy="9.500" r="4.800" fill="#3d3d3d"/><circle cx="11.400" cy="8" r="1.600" fill="#e8e8e8"/></svg></div>
    <div class="abs" style="left:123.5px;top:548.5px;width:414.5px;height:67.500px;background:#6c7c99;border-bottom:1.500px solid #3a3a3a"></div>
    <div class="abs" style="left:71px;top:615.5px;width:52.500px;height:67.500px;background:#535353;border-bottom:1.500px solid #3a3a3a;border-right:1.500px solid #3a3a3a"><svg class="abs" style="left:14.5px;top:24px" width="22.5" height="17.3" viewBox="0 0 26 20"><path d="M1.500 10 c5 -9 18 -9 23 0 c-5 8 -18 8 -23 0z" fill="#d0d0d0"/><path d="M1.500 10 c5 -9 18 -9 23 0" fill="none" stroke="#e6e6e6" stroke-width="1.600"/><circle cx="13" cy="9.500" r="4.800" fill="#3d3d3d"/><circle cx="11.400" cy="8" r="1.600" fill="#e8e8e8"/></svg></div>
    <div class="abs" style="left:123.5px;top:615.5px;width:414.5px;height:67.500px;background:#535353;border-bottom:1.500px solid #3a3a3a"></div>
    <div class="abs" style="left:71px;top:683px;width:52.500px;height:67.500px;background:#535353;border-bottom:1.500px solid #3a3a3a;border-right:1.500px solid #3a3a3a"><svg class="abs" style="left:14.5px;top:24px" width="22.5" height="17.3" viewBox="0 0 26 20"><path d="M1.500 10 c5 -9 18 -9 23 0 c-5 8 -18 8 -23 0z" fill="#d0d0d0"/><path d="M1.500 10 c5 -9 18 -9 23 0" fill="none" stroke="#e6e6e6" stroke-width="1.600"/><circle cx="13" cy="9.500" r="4.800" fill="#3d3d3d"/><circle cx="11.400" cy="8" r="1.600" fill="#e8e8e8"/></svg></div>
    <div class="abs" style="left:123.5px;top:683px;width:414.5px;height:67.500px;background:#535353;border-bottom:1.500px solid #3a3a3a"></div>
    <svg class="abs" style="left:125.5px;top:550.5px" width="64" height="63" viewBox="0 0 64 63"><defs><linearGradient id="tg" x1="0" y1="0" x2="0" y2="1"><stop offset="0" stop-color="#f2f2f2"/><stop offset="1" stop-color="#b9bcc4"/></linearGradient></defs><path d="M1 15 V1 H21 M43 1 H63 V15 M63 47 V62 H43 M21 62 H1 V47" fill="none" stroke="#f6f6f6" stroke-width="1.8"/><text x="32.5" y="43.5" text-anchor="middle" font-family="Liberation Serif, serif" font-weight="bold" font-size="38" fill="url(#tg)">T</text></svg>
    <div class="lbl" style="left:199.5px;top:573.5px;font-size:15.500px">A</div>
    <div class="abs" style="left:129.5px;top:621.5px;width:42px;height:55px;background:#fff;border:1.500px solid #1a1a1a"><div class="abs" style="left:0;top:5px;width:39px;height:42px;background:linear-gradient(#161d30 0%,#1f2b40 35%,#3d5c55 50%,#7f9466 56%,#8c8478 60%,#2b2722 66%,#1d1b18 78%,#2a3a38 84%,#18202e 90%,#121826 100%)"></div><div class="abs" style="left:2px;top:1px;width:35px;height:2px;background:repeating-linear-gradient(90deg,#888 0 4px,transparent 4px 8px)"></div><div class="abs" style="left:2px;top:49px;width:35px;height:2px;background:repeating-linear-gradient(90deg,#888 0 4px,transparent 4px 8px)"></div></div>
    <div class="lbl" style="left:185px;top:641.2px;font-size:18.500px">Hintergrund 1</div>
    <div class="abs" style="left:129.5px;top:688.5px;width:42px;height:55.500px;background:#fff;border:1.500px solid #1a1a1a"></div>
    <div class="lbl" style="left:185px;top:708.2px;font-size:18.500px">Hintergrund</div>
    <svg class="abs" style="left:490.5px;top:705px" width="19" height="23" viewBox="0 0 19 23"><path d="M5 10 v-3.500 a4.500 4.500 0 0 1 9 0 v3.500" fill="none" stroke="#d6d6d6" stroke-width="1.800"/><rect x="2.500" y="10" width="14" height="11" rx="1" fill="none" stroke="#d6d6d6" stroke-width="1.800"/><rect x="8" y="13.500" width="3" height="4" fill="#d6d6d6"/></svg>
    <div class="abs" style="left:71px;top:1205.5px;width:493px;height:33.500px;background:#535353;border-top:2px solid #3a3a3a"></div>
    <svg class="abs" style="left:212px;top:1215.5px" width="26" height="16" viewBox="0 0 26 16"><rect x="1.500" y="3" width="13" height="10" rx="5" fill="none" stroke="#c4c4c4" stroke-width="2.400"/><rect x="11.500" y="3" width="13" height="10" rx="5" fill="none" stroke="#c4c4c4" stroke-width="2.400"/><path d="M8.500 8 h9" stroke="#c4c4c4" stroke-width="2.400" stroke-linecap="round"/></svg>
    <div class="abs" style="left:261px;top:1206.5px;font-family:'Liberation Serif',serif;font-style:italic;font-size:27px;color:#d0d0d0;letter-spacing:-1px">fx</div><div class="dn" style="left:285px;top:1230.5px;border-top-width:4px;border-left-width:3px;border-right-width:3px"></div>
    <svg class="abs" style="left:307px;top:1214.5px" width="24" height="18" viewBox="0 0 24 18"><rect x="0.500" y="0.500" width="23" height="17" fill="#cdcdcd"/><circle cx="12" cy="9" r="4.300" fill="#444"/></svg>
    <svg class="abs" style="left:354px;top:1212.5px" width="22" height="22" viewBox="0 0 22 22"><circle cx="11" cy="10.500" r="8.500" fill="none" stroke="#d0d0d0" stroke-width="2"/><path d="M5 16.500 A8.500 8.500 0 0 1 17 4.500z" fill="#d0d0d0"/></svg><div class="dn" style="left:378px;top:1230.5px;border-top-width:4px;border-left-width:3px;border-right-width:3px"></div>
    <svg class="abs" style="left:400px;top:1213.5px" width="23" height="19" viewBox="0 0 23 19"><path d="M1 2 a1.500 1.500 0 0 1 1.500 -1.500 h6 l2.500 3 h10.500 v15 h-20.500z" fill="#cdcdcd"/></svg>
    <svg class="abs" style="left:448px;top:1213.5px" width="20" height="19" viewBox="0 0 20 19"><path d="M2 1 h17 v17 h-9 l-8 -8z" fill="#cdcdcd"/><path d="M2 10 h8 v8z" fill="#666" stroke="#cdcdcd" stroke-width="1.200"/></svg>
    <svg class="abs" style="left:494px;top:1212.5px" width="21" height="22" viewBox="0 0 21 22"><path d="M1 6 h19 M7 5.500 v-3 h7 v3" fill="none" stroke="#d0d0d0" stroke-width="2.200"/><path d="M3.500 8 l1 13 h12 l1 -13" fill="none" stroke="#d0d0d0" stroke-width="1.800"/><path d="M7.500 9.500 v9 M10.500 9.500 v9 M13.500 9.500 v9" stroke="#d0d0d0" stroke-width="1.700"/></svg>
  </div>
</div>

<div id="menu">
  <div class="i" style="letter-spacing:-0.27px">Rückgängig: Zauberstab<b><u>⌘</u><i>Z</i></b></div>
  <div class="i d" style="letter-spacing:0.08px">Schritt vorwärts<b><u><s>⇧</s>⌘</u><i>Z</i></b></div>
  <div class="i" style="letter-spacing:0.07px">Schritt zurück<b><u>⌥⌘</u><i>Z</i></b></div>
  <div class="s"></div>
  <div class="i d" style="letter-spacing:-0.38px">Verblassen...<b><u><s>⇧</s>⌘</u><i>F</i></b></div>
  <div class="s"></div>
  <div class="i d" style="letter-spacing:-0.43px">Ausschneiden<b><u>⌘</u><i>X</i></b></div>
  <div class="i" style="letter-spacing:-0.6px">Kopieren<b><u>⌘</u><i>C</i></b></div>
  <div class="i" style="letter-spacing:-0.28px">Auf eine Ebene reduziert kopieren<b><u><s>⇧</s>⌘</u><i>C</i></b></div>
  <div class="i" style="letter-spacing:-0.46px">Einfügen<b><u>⌘</u><i>V</i></b></div>
  <div class="i sel" style="letter-spacing:-0.42px">Einfügen Spezial<em></em></div>
  <div class="i d" style="letter-spacing:-0.49px">Löschen</div>
  <div class="s"></div>
  <div class="i" style="letter-spacing:-0.08px">Rechtschreibprüfung...</div>
  <div class="i" style="letter-spacing:-0.19px">Text suchen und ersetzen...</div>
  <div class="s"></div>
  <div class="i d" style="letter-spacing:-0.32px">Fläche füllen...<b><u><s>⇧</s></u><span style="font-size:18.5px;margin-left:3px">F5</span></b></div>
  <div class="i d" style="letter-spacing:-0.17px">Kontur füllen...</div>
  <div class="s"></div>
  <div class="i d" style="letter-spacing:-0.2px">Inhaltsbasiert skalieren<b><u>^<s>⇧</s>⌘</u><i>C</i></b></div>
  <div class="i d" style="letter-spacing:-0.02px">Formgitter</div>
  <div class="i d" style="letter-spacing:-0.12px">Perspektivische Verformung</div>
  <div class="i d" style="letter-spacing:-0.23px">Frei transformieren<b><u>⌘</u><i>T</i></b></div>
  <div class="i d" style="letter-spacing:-0.28px">Transformieren<em></em></div>
  <div class="i d" style="letter-spacing:-0.22px">Ebenen automatisch ausrichten...</div>
  <div class="i d" style="letter-spacing:-0.25px">Ebenen automatisch überblenden...</div>
  <div class="s"></div>
  <div class="i" style="letter-spacing:-0.24px">Pinselvorgabe festlegen...</div>
  <div class="i d" style="letter-spacing:-0.1px">Muster festlegen...</div>
  <div class="i d" style="letter-spacing:-0.38px">Eigene Form festlegen...</div>
  <div class="s"></div>
  <div class="i" style="letter-spacing:-0.54px">Entleeren<em></em></div>
  <div class="s"></div>
  <div class="i" style="letter-spacing:-0.44px">Adobe PDF-Vorgaben...</div>
  <div class="i" style="letter-spacing:-0.4px">Vorgaben<em></em></div>
  <div class="i" style="letter-spacing:-0.32px">Remoteverbindungen...</div>
  <div class="s"></div>
  <div class="i" style="letter-spacing:-0.31px">Farbeinstellungen...<b><u><s>⇧</s>⌘</u><i>K</i></b></div>
  <div class="i" style="letter-spacing:-0.27px">Profil zuweisen...</div>
  <div class="i" style="letter-spacing:-0.35px">In Profil umwandeln...</div>
  <div class="s"></div>
  <div class="i" style="letter-spacing:-0.05px">Tastaturbefehle...<b><u>⌥<s>⇧</s>⌘</u><i>K</i></b></div>
  <div class="i" style="letter-spacing:-0.47px">Menüs...<b><u>⌥<s>⇧</s>⌘</u><i>M</i></b></div>
  <div class="abs" style="left:260px;top:1305px;width:0;height:0;border-top:13px solid #3a3a3a;border-left:8.5px solid transparent;border-right:8.5px solid transparent"></div>
</div>
<div id="sub">
  <div class="i" style="letter-spacing:-0.18px">An Originalposition einfügen</div>
  <div class="i sel" style="letter-spacing:-0.3px">In die Auswahl einfügen<b><u><s>⇧</s>⌘</u><i>V</i></b></div>
  <div class="i" style="letter-spacing:-0.41px">Außen einfügen</div>
</div>

<div id="menubar">
  <div class="abs" style="left:1420px;top:0;width:794px;height:37px;background:#fdfdfd"></div>
  <svg class="abs" style="left:35px;top:4px" width="26" height="29" viewBox="0 0 26 29"><path d="M17.600 0.500 c0.200 1.700 -0.500 3.300 -1.500 4.500 c-1 1.200 -2.700 2.100 -4.200 2 c-0.200 -1.600 0.600 -3.300 1.500 -4.300 c1.100 -1.200 2.800 -2.100 4.200 -2.200z M22.800 9.800 c-2 1.200 -3 3 -3 5.200 c0 2.600 1.500 4.600 3.700 5.500 c-0.500 1.500 -1.200 2.900 -2.100 4.200 c-1.200 1.800 -2.500 3.600 -4.500 3.600 c-1.900 0 -2.500 -1.200 -4.700 -1.200 c-2.200 0 -2.900 1.200 -4.700 1.200 c-2 0.100 -3.400 -1.900 -4.700 -3.700 c-2.500 -3.700 -4.500 -10.400 -1.800 -14.900 c1.300 -2.200 3.600 -3.700 6.100 -3.700 c1.900 0 3.700 1.300 4.800 1.300 c1.200 0 3.300 -1.600 5.600 -1.400 c1 0 3.700 0.400 5.300 2.900z" fill="#4a4a4a"/></svg>
  <span style="left:94px;font-weight:bold;letter-spacing:-0.3px">Photoshop CC</span>
  <span style="left:296px;letter-spacing:-0.28px">Datei</span>
  <span class="hl" style="left:370px;width:152px;padding-left:16px;letter-spacing:-0.09px">Bearbeiten</span>
  <span style="left:539.5px;letter-spacing:-0.42px">Bild</span>
  <span style="left:614px;letter-spacing:-0.9px">Ebene</span>
  <span style="left:715.7px;letter-spacing:0.36px">Schrift</span>
  <span style="left:822.5px;letter-spacing:-0.47px">Auswahl</span>
  <span style="left:947.8px;letter-spacing:-0.18px">Filter</span>
  <span style="left:1035px;letter-spacing:-0.48px">3D</span>
  <span style="left:1098.5px;letter-spacing:0.22px">Ansicht</span>
  <span style="left:1214.5px;letter-spacing:-0.18px">Fenster</span>
  <span style="left:1331px;letter-spacing:-0.0px">Hilfe</span>
</div>
</body>
</html>
